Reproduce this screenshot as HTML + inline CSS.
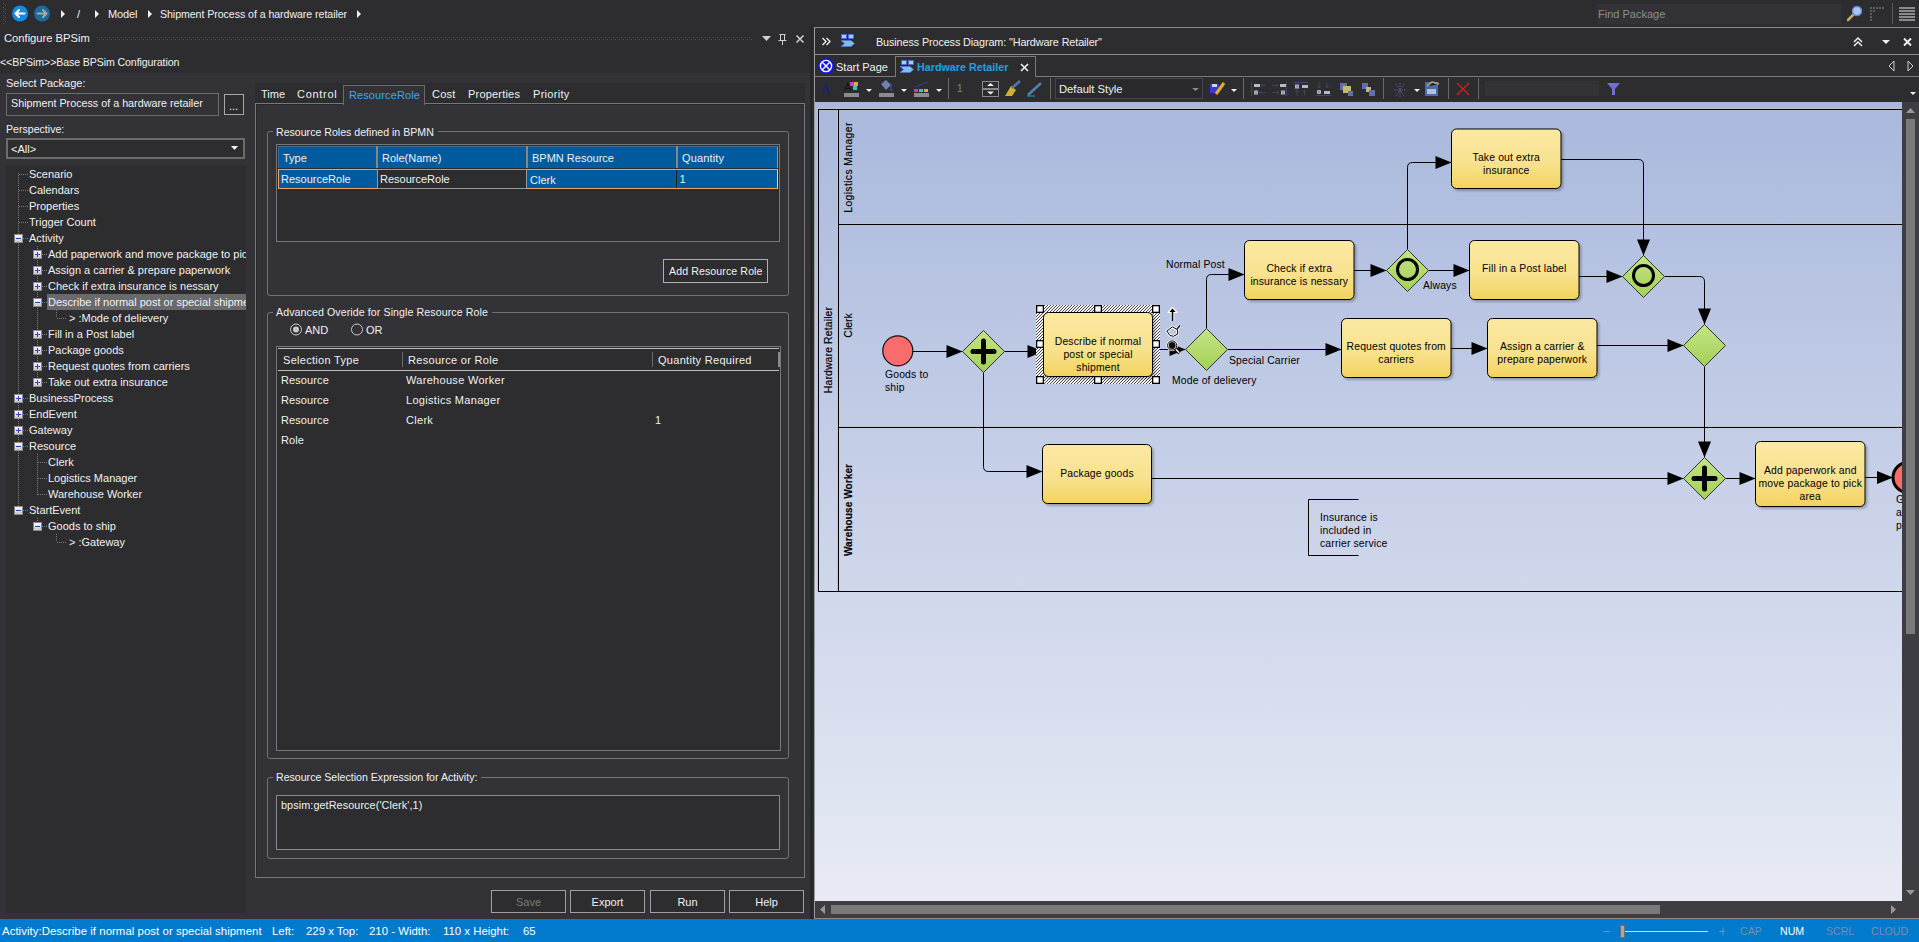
<!DOCTYPE html><html><head><meta charset="utf-8"><style>
html,body{margin:0;padding:0;} body{width:1919px;height:942px;position:relative;overflow:hidden;background:#2d2d30;font-family:"Liberation Sans", sans-serif;} div{box-sizing:border-box;}
</style></head><body>
<svg style="position:absolute;left:0;top:0" width="10" height="27"><rect x="3" y="3" width="1" height="1" fill="#5a5a5e"/><rect x="5" y="5" width="1" height="1" fill="#5a5a5e"/><rect x="3" y="7" width="1" height="1" fill="#5a5a5e"/><rect x="5" y="9" width="1" height="1" fill="#5a5a5e"/><rect x="3" y="11" width="1" height="1" fill="#5a5a5e"/><rect x="5" y="13" width="1" height="1" fill="#5a5a5e"/><rect x="3" y="15" width="1" height="1" fill="#5a5a5e"/><rect x="5" y="17" width="1" height="1" fill="#5a5a5e"/><rect x="3" y="19" width="1" height="1" fill="#5a5a5e"/><rect x="5" y="21" width="1" height="1" fill="#5a5a5e"/><rect x="3" y="23" width="1" height="1" fill="#5a5a5e"/></svg>
<svg style="position:absolute;left:0;top:0" width="60" height="27">
<circle cx="20" cy="13.5" r="8" fill="#1a8ad8"/>
<path d="M15.5 13.5 H24.5 M15.5 13.5 L19 10 M15.5 13.5 L19 17" stroke="#fff" stroke-width="2" fill="none" stroke-linecap="round"/>
<circle cx="42" cy="13.5" r="8" fill="#1a6a9c"/>
<path d="M46.5 13.5 H37.5 M46.5 13.5 L43 10 M46.5 13.5 L43 17" stroke="#a8a8a8" stroke-width="2" fill="none" stroke-linecap="round"/>
</svg>
<svg style="position:absolute;left:61px;top:10px" width="5" height="9"><path d="M0 0 L4 4 L0 8 Z" fill="#f1f1f1"/></svg>
<div style="position:absolute;left:77px;top:7.0px;line-height:14px;font-size:11px;color:#f1f1f1;white-space:nowrap;text-align:left;">/</div>
<svg style="position:absolute;left:95px;top:10px" width="5" height="9"><path d="M0 0 L4 4 L0 8 Z" fill="#f1f1f1"/></svg>
<div style="position:absolute;left:108px;top:7.0px;line-height:14px;font-size:11px;color:#f1f1f1;white-space:nowrap;text-align:left;letter-spacing:-0.1px">Model</div>
<svg style="position:absolute;left:148px;top:10px" width="5" height="9"><path d="M0 0 L4 4 L0 8 Z" fill="#f1f1f1"/></svg>
<div style="position:absolute;left:160px;top:7.0px;line-height:14px;font-size:10.6px;color:#f1f1f1;white-space:nowrap;text-align:left;letter-spacing:-0.05px">Shipment Process of a hardware retailer</div>
<svg style="position:absolute;left:357px;top:10px" width="5" height="9"><path d="M0 0 L4 4 L0 8 Z" fill="#f1f1f1"/></svg>
<div style="position:absolute;left:1597px;top:4px;width:244px;height:20px;background:#333337"></div>
<div style="position:absolute;left:1598px;top:7.0px;line-height:14px;font-size:11px;color:#8c8c8c;white-space:nowrap;text-align:left;">Find Package</div>
<svg style="position:absolute;left:1845px;top:5px" width="20" height="18">
<line x1="3" y1="15" x2="9" y2="9" stroke="#c8a878" stroke-width="2.5" stroke-linecap="round"/>
<circle cx="12" cy="6" r="4.5" fill="#a8c8f0" stroke="#6a8ad0" stroke-width="1.5"/>
</svg>
<svg style="position:absolute;left:1870px;top:7px" width="15" height="15"><rect x="0" y="0" width="2" height="2" fill="#5c5c5c"/><rect x="3" y="0" width="2" height="2" fill="#5c5c5c"/><rect x="6" y="0" width="2" height="2" fill="#5c5c5c"/><rect x="9" y="0" width="2" height="2" fill="#5c5c5c"/><rect x="12" y="0" width="2" height="2" fill="#5c5c5c"/><rect x="0" y="3" width="2" height="2" fill="#5c5c5c"/><rect x="0" y="6" width="2" height="2" fill="#5c5c5c"/><rect x="3" y="3" width="2" height="2" fill="#5c5c5c"/><rect x="0" y="9" width="2" height="2" fill="#5c5c5c"/><rect x="0" y="12" width="2" height="2" fill="#5c5c5c"/></svg>
<div style="position:absolute;left:1892px;top:3px;width:1px;height:21px;background:#5a5a5e"></div>
<svg style="position:absolute;left:1899px;top:7px" width="16" height="15"><rect x="0" y="0" width="16" height="2" fill="#8a8a8a"/><rect x="0" y="3" width="16" height="2" fill="#8a8a8a"/><rect x="0" y="6" width="16" height="2" fill="#8a8a8a"/><rect x="0" y="9" width="16" height="2" fill="#8a8a8a"/><rect x="0" y="12" width="16" height="2" fill="#8a8a8a"/></svg>
<div style="position:absolute;left:4px;top:31.0px;line-height:14px;font-size:11.2px;color:#f1f1f1;white-space:nowrap;text-align:left;">Configure BPSim</div>
<svg style="position:absolute;left:97px;top:37px" width="660" height="4"><rect x="0" y="0" width="1" height="1" fill="#55555a"/><rect x="2" y="2" width="1" height="1" fill="#55555a"/><rect x="4" y="0" width="1" height="1" fill="#55555a"/><rect x="6" y="2" width="1" height="1" fill="#55555a"/><rect x="8" y="0" width="1" height="1" fill="#55555a"/><rect x="10" y="2" width="1" height="1" fill="#55555a"/><rect x="12" y="0" width="1" height="1" fill="#55555a"/><rect x="14" y="2" width="1" height="1" fill="#55555a"/><rect x="16" y="0" width="1" height="1" fill="#55555a"/><rect x="18" y="2" width="1" height="1" fill="#55555a"/><rect x="20" y="0" width="1" height="1" fill="#55555a"/><rect x="22" y="2" width="1" height="1" fill="#55555a"/><rect x="24" y="0" width="1" height="1" fill="#55555a"/><rect x="26" y="2" width="1" height="1" fill="#55555a"/><rect x="28" y="0" width="1" height="1" fill="#55555a"/><rect x="30" y="2" width="1" height="1" fill="#55555a"/><rect x="32" y="0" width="1" height="1" fill="#55555a"/><rect x="34" y="2" width="1" height="1" fill="#55555a"/><rect x="36" y="0" width="1" height="1" fill="#55555a"/><rect x="38" y="2" width="1" height="1" fill="#55555a"/><rect x="40" y="0" width="1" height="1" fill="#55555a"/><rect x="42" y="2" width="1" height="1" fill="#55555a"/><rect x="44" y="0" width="1" height="1" fill="#55555a"/><rect x="46" y="2" width="1" height="1" fill="#55555a"/><rect x="48" y="0" width="1" height="1" fill="#55555a"/><rect x="50" y="2" width="1" height="1" fill="#55555a"/><rect x="52" y="0" width="1" height="1" fill="#55555a"/><rect x="54" y="2" width="1" height="1" fill="#55555a"/><rect x="56" y="0" width="1" height="1" fill="#55555a"/><rect x="58" y="2" width="1" height="1" fill="#55555a"/><rect x="60" y="0" width="1" height="1" fill="#55555a"/><rect x="62" y="2" width="1" height="1" fill="#55555a"/><rect x="64" y="0" width="1" height="1" fill="#55555a"/><rect x="66" y="2" width="1" height="1" fill="#55555a"/><rect x="68" y="0" width="1" height="1" fill="#55555a"/><rect x="70" y="2" width="1" height="1" fill="#55555a"/><rect x="72" y="0" width="1" height="1" fill="#55555a"/><rect x="74" y="2" width="1" height="1" fill="#55555a"/><rect x="76" y="0" width="1" height="1" fill="#55555a"/><rect x="78" y="2" width="1" height="1" fill="#55555a"/><rect x="80" y="0" width="1" height="1" fill="#55555a"/><rect x="82" y="2" width="1" height="1" fill="#55555a"/><rect x="84" y="0" width="1" height="1" fill="#55555a"/><rect x="86" y="2" width="1" height="1" fill="#55555a"/><rect x="88" y="0" width="1" height="1" fill="#55555a"/><rect x="90" y="2" width="1" height="1" fill="#55555a"/><rect x="92" y="0" width="1" height="1" fill="#55555a"/><rect x="94" y="2" width="1" height="1" fill="#55555a"/><rect x="96" y="0" width="1" height="1" fill="#55555a"/><rect x="98" y="2" width="1" height="1" fill="#55555a"/><rect x="100" y="0" width="1" height="1" fill="#55555a"/><rect x="102" y="2" width="1" height="1" fill="#55555a"/><rect x="104" y="0" width="1" height="1" fill="#55555a"/><rect x="106" y="2" width="1" height="1" fill="#55555a"/><rect x="108" y="0" width="1" height="1" fill="#55555a"/><rect x="110" y="2" width="1" height="1" fill="#55555a"/><rect x="112" y="0" width="1" height="1" fill="#55555a"/><rect x="114" y="2" width="1" height="1" fill="#55555a"/><rect x="116" y="0" width="1" height="1" fill="#55555a"/><rect x="118" y="2" width="1" height="1" fill="#55555a"/><rect x="120" y="0" width="1" height="1" fill="#55555a"/><rect x="122" y="2" width="1" height="1" fill="#55555a"/><rect x="124" y="0" width="1" height="1" fill="#55555a"/><rect x="126" y="2" width="1" height="1" fill="#55555a"/><rect x="128" y="0" width="1" height="1" fill="#55555a"/><rect x="130" y="2" width="1" height="1" fill="#55555a"/><rect x="132" y="0" width="1" height="1" fill="#55555a"/><rect x="134" y="2" width="1" height="1" fill="#55555a"/><rect x="136" y="0" width="1" height="1" fill="#55555a"/><rect x="138" y="2" width="1" height="1" fill="#55555a"/><rect x="140" y="0" width="1" height="1" fill="#55555a"/><rect x="142" y="2" width="1" height="1" fill="#55555a"/><rect x="144" y="0" width="1" height="1" fill="#55555a"/><rect x="146" y="2" width="1" height="1" fill="#55555a"/><rect x="148" y="0" width="1" height="1" fill="#55555a"/><rect x="150" y="2" width="1" height="1" fill="#55555a"/><rect x="152" y="0" width="1" height="1" fill="#55555a"/><rect x="154" y="2" width="1" height="1" fill="#55555a"/><rect x="156" y="0" width="1" height="1" fill="#55555a"/><rect x="158" y="2" width="1" height="1" fill="#55555a"/><rect x="160" y="0" width="1" height="1" fill="#55555a"/><rect x="162" y="2" width="1" height="1" fill="#55555a"/><rect x="164" y="0" width="1" height="1" fill="#55555a"/><rect x="166" y="2" width="1" height="1" fill="#55555a"/><rect x="168" y="0" width="1" height="1" fill="#55555a"/><rect x="170" y="2" width="1" height="1" fill="#55555a"/><rect x="172" y="0" width="1" height="1" fill="#55555a"/><rect x="174" y="2" width="1" height="1" fill="#55555a"/><rect x="176" y="0" width="1" height="1" fill="#55555a"/><rect x="178" y="2" width="1" height="1" fill="#55555a"/><rect x="180" y="0" width="1" height="1" fill="#55555a"/><rect x="182" y="2" width="1" height="1" fill="#55555a"/><rect x="184" y="0" width="1" height="1" fill="#55555a"/><rect x="186" y="2" width="1" height="1" fill="#55555a"/><rect x="188" y="0" width="1" height="1" fill="#55555a"/><rect x="190" y="2" width="1" height="1" fill="#55555a"/><rect x="192" y="0" width="1" height="1" fill="#55555a"/><rect x="194" y="2" width="1" height="1" fill="#55555a"/><rect x="196" y="0" width="1" height="1" fill="#55555a"/><rect x="198" y="2" width="1" height="1" fill="#55555a"/><rect x="200" y="0" width="1" height="1" fill="#55555a"/><rect x="202" y="2" width="1" height="1" fill="#55555a"/><rect x="204" y="0" width="1" height="1" fill="#55555a"/><rect x="206" y="2" width="1" height="1" fill="#55555a"/><rect x="208" y="0" width="1" height="1" fill="#55555a"/><rect x="210" y="2" width="1" height="1" fill="#55555a"/><rect x="212" y="0" width="1" height="1" fill="#55555a"/><rect x="214" y="2" width="1" height="1" fill="#55555a"/><rect x="216" y="0" width="1" height="1" fill="#55555a"/><rect x="218" y="2" width="1" height="1" fill="#55555a"/><rect x="220" y="0" width="1" height="1" fill="#55555a"/><rect x="222" y="2" width="1" height="1" fill="#55555a"/><rect x="224" y="0" width="1" height="1" fill="#55555a"/><rect x="226" y="2" width="1" height="1" fill="#55555a"/><rect x="228" y="0" width="1" height="1" fill="#55555a"/><rect x="230" y="2" width="1" height="1" fill="#55555a"/><rect x="232" y="0" width="1" height="1" fill="#55555a"/><rect x="234" y="2" width="1" height="1" fill="#55555a"/><rect x="236" y="0" width="1" height="1" fill="#55555a"/><rect x="238" y="2" width="1" height="1" fill="#55555a"/><rect x="240" y="0" width="1" height="1" fill="#55555a"/><rect x="242" y="2" width="1" height="1" fill="#55555a"/><rect x="244" y="0" width="1" height="1" fill="#55555a"/><rect x="246" y="2" width="1" height="1" fill="#55555a"/><rect x="248" y="0" width="1" height="1" fill="#55555a"/><rect x="250" y="2" width="1" height="1" fill="#55555a"/><rect x="252" y="0" width="1" height="1" fill="#55555a"/><rect x="254" y="2" width="1" height="1" fill="#55555a"/><rect x="256" y="0" width="1" height="1" fill="#55555a"/><rect x="258" y="2" width="1" height="1" fill="#55555a"/><rect x="260" y="0" width="1" height="1" fill="#55555a"/><rect x="262" y="2" width="1" height="1" fill="#55555a"/><rect x="264" y="0" width="1" height="1" fill="#55555a"/><rect x="266" y="2" width="1" height="1" fill="#55555a"/><rect x="268" y="0" width="1" height="1" fill="#55555a"/><rect x="270" y="2" width="1" height="1" fill="#55555a"/><rect x="272" y="0" width="1" height="1" fill="#55555a"/><rect x="274" y="2" width="1" height="1" fill="#55555a"/><rect x="276" y="0" width="1" height="1" fill="#55555a"/><rect x="278" y="2" width="1" height="1" fill="#55555a"/><rect x="280" y="0" width="1" height="1" fill="#55555a"/><rect x="282" y="2" width="1" height="1" fill="#55555a"/><rect x="284" y="0" width="1" height="1" fill="#55555a"/><rect x="286" y="2" width="1" height="1" fill="#55555a"/><rect x="288" y="0" width="1" height="1" fill="#55555a"/><rect x="290" y="2" width="1" height="1" fill="#55555a"/><rect x="292" y="0" width="1" height="1" fill="#55555a"/><rect x="294" y="2" width="1" height="1" fill="#55555a"/><rect x="296" y="0" width="1" height="1" fill="#55555a"/><rect x="298" y="2" width="1" height="1" fill="#55555a"/><rect x="300" y="0" width="1" height="1" fill="#55555a"/><rect x="302" y="2" width="1" height="1" fill="#55555a"/><rect x="304" y="0" width="1" height="1" fill="#55555a"/><rect x="306" y="2" width="1" height="1" fill="#55555a"/><rect x="308" y="0" width="1" height="1" fill="#55555a"/><rect x="310" y="2" width="1" height="1" fill="#55555a"/><rect x="312" y="0" width="1" height="1" fill="#55555a"/><rect x="314" y="2" width="1" height="1" fill="#55555a"/><rect x="316" y="0" width="1" height="1" fill="#55555a"/><rect x="318" y="2" width="1" height="1" fill="#55555a"/><rect x="320" y="0" width="1" height="1" fill="#55555a"/><rect x="322" y="2" width="1" height="1" fill="#55555a"/><rect x="324" y="0" width="1" height="1" fill="#55555a"/><rect x="326" y="2" width="1" height="1" fill="#55555a"/><rect x="328" y="0" width="1" height="1" fill="#55555a"/><rect x="330" y="2" width="1" height="1" fill="#55555a"/><rect x="332" y="0" width="1" height="1" fill="#55555a"/><rect x="334" y="2" width="1" height="1" fill="#55555a"/><rect x="336" y="0" width="1" height="1" fill="#55555a"/><rect x="338" y="2" width="1" height="1" fill="#55555a"/><rect x="340" y="0" width="1" height="1" fill="#55555a"/><rect x="342" y="2" width="1" height="1" fill="#55555a"/><rect x="344" y="0" width="1" height="1" fill="#55555a"/><rect x="346" y="2" width="1" height="1" fill="#55555a"/><rect x="348" y="0" width="1" height="1" fill="#55555a"/><rect x="350" y="2" width="1" height="1" fill="#55555a"/><rect x="352" y="0" width="1" height="1" fill="#55555a"/><rect x="354" y="2" width="1" height="1" fill="#55555a"/><rect x="356" y="0" width="1" height="1" fill="#55555a"/><rect x="358" y="2" width="1" height="1" fill="#55555a"/><rect x="360" y="0" width="1" height="1" fill="#55555a"/><rect x="362" y="2" width="1" height="1" fill="#55555a"/><rect x="364" y="0" width="1" height="1" fill="#55555a"/><rect x="366" y="2" width="1" height="1" fill="#55555a"/><rect x="368" y="0" width="1" height="1" fill="#55555a"/><rect x="370" y="2" width="1" height="1" fill="#55555a"/><rect x="372" y="0" width="1" height="1" fill="#55555a"/><rect x="374" y="2" width="1" height="1" fill="#55555a"/><rect x="376" y="0" width="1" height="1" fill="#55555a"/><rect x="378" y="2" width="1" height="1" fill="#55555a"/><rect x="380" y="0" width="1" height="1" fill="#55555a"/><rect x="382" y="2" width="1" height="1" fill="#55555a"/><rect x="384" y="0" width="1" height="1" fill="#55555a"/><rect x="386" y="2" width="1" height="1" fill="#55555a"/><rect x="388" y="0" width="1" height="1" fill="#55555a"/><rect x="390" y="2" width="1" height="1" fill="#55555a"/><rect x="392" y="0" width="1" height="1" fill="#55555a"/><rect x="394" y="2" width="1" height="1" fill="#55555a"/><rect x="396" y="0" width="1" height="1" fill="#55555a"/><rect x="398" y="2" width="1" height="1" fill="#55555a"/><rect x="400" y="0" width="1" height="1" fill="#55555a"/><rect x="402" y="2" width="1" height="1" fill="#55555a"/><rect x="404" y="0" width="1" height="1" fill="#55555a"/><rect x="406" y="2" width="1" height="1" fill="#55555a"/><rect x="408" y="0" width="1" height="1" fill="#55555a"/><rect x="410" y="2" width="1" height="1" fill="#55555a"/><rect x="412" y="0" width="1" height="1" fill="#55555a"/><rect x="414" y="2" width="1" height="1" fill="#55555a"/><rect x="416" y="0" width="1" height="1" fill="#55555a"/><rect x="418" y="2" width="1" height="1" fill="#55555a"/><rect x="420" y="0" width="1" height="1" fill="#55555a"/><rect x="422" y="2" width="1" height="1" fill="#55555a"/><rect x="424" y="0" width="1" height="1" fill="#55555a"/><rect x="426" y="2" width="1" height="1" fill="#55555a"/><rect x="428" y="0" width="1" height="1" fill="#55555a"/><rect x="430" y="2" width="1" height="1" fill="#55555a"/><rect x="432" y="0" width="1" height="1" fill="#55555a"/><rect x="434" y="2" width="1" height="1" fill="#55555a"/><rect x="436" y="0" width="1" height="1" fill="#55555a"/><rect x="438" y="2" width="1" height="1" fill="#55555a"/><rect x="440" y="0" width="1" height="1" fill="#55555a"/><rect x="442" y="2" width="1" height="1" fill="#55555a"/><rect x="444" y="0" width="1" height="1" fill="#55555a"/><rect x="446" y="2" width="1" height="1" fill="#55555a"/><rect x="448" y="0" width="1" height="1" fill="#55555a"/><rect x="450" y="2" width="1" height="1" fill="#55555a"/><rect x="452" y="0" width="1" height="1" fill="#55555a"/><rect x="454" y="2" width="1" height="1" fill="#55555a"/><rect x="456" y="0" width="1" height="1" fill="#55555a"/><rect x="458" y="2" width="1" height="1" fill="#55555a"/><rect x="460" y="0" width="1" height="1" fill="#55555a"/><rect x="462" y="2" width="1" height="1" fill="#55555a"/><rect x="464" y="0" width="1" height="1" fill="#55555a"/><rect x="466" y="2" width="1" height="1" fill="#55555a"/><rect x="468" y="0" width="1" height="1" fill="#55555a"/><rect x="470" y="2" width="1" height="1" fill="#55555a"/><rect x="472" y="0" width="1" height="1" fill="#55555a"/><rect x="474" y="2" width="1" height="1" fill="#55555a"/><rect x="476" y="0" width="1" height="1" fill="#55555a"/><rect x="478" y="2" width="1" height="1" fill="#55555a"/><rect x="480" y="0" width="1" height="1" fill="#55555a"/><rect x="482" y="2" width="1" height="1" fill="#55555a"/><rect x="484" y="0" width="1" height="1" fill="#55555a"/><rect x="486" y="2" width="1" height="1" fill="#55555a"/><rect x="488" y="0" width="1" height="1" fill="#55555a"/><rect x="490" y="2" width="1" height="1" fill="#55555a"/><rect x="492" y="0" width="1" height="1" fill="#55555a"/><rect x="494" y="2" width="1" height="1" fill="#55555a"/><rect x="496" y="0" width="1" height="1" fill="#55555a"/><rect x="498" y="2" width="1" height="1" fill="#55555a"/><rect x="500" y="0" width="1" height="1" fill="#55555a"/><rect x="502" y="2" width="1" height="1" fill="#55555a"/><rect x="504" y="0" width="1" height="1" fill="#55555a"/><rect x="506" y="2" width="1" height="1" fill="#55555a"/><rect x="508" y="0" width="1" height="1" fill="#55555a"/><rect x="510" y="2" width="1" height="1" fill="#55555a"/><rect x="512" y="0" width="1" height="1" fill="#55555a"/><rect x="514" y="2" width="1" height="1" fill="#55555a"/><rect x="516" y="0" width="1" height="1" fill="#55555a"/><rect x="518" y="2" width="1" height="1" fill="#55555a"/><rect x="520" y="0" width="1" height="1" fill="#55555a"/><rect x="522" y="2" width="1" height="1" fill="#55555a"/><rect x="524" y="0" width="1" height="1" fill="#55555a"/><rect x="526" y="2" width="1" height="1" fill="#55555a"/><rect x="528" y="0" width="1" height="1" fill="#55555a"/><rect x="530" y="2" width="1" height="1" fill="#55555a"/><rect x="532" y="0" width="1" height="1" fill="#55555a"/><rect x="534" y="2" width="1" height="1" fill="#55555a"/><rect x="536" y="0" width="1" height="1" fill="#55555a"/><rect x="538" y="2" width="1" height="1" fill="#55555a"/><rect x="540" y="0" width="1" height="1" fill="#55555a"/><rect x="542" y="2" width="1" height="1" fill="#55555a"/><rect x="544" y="0" width="1" height="1" fill="#55555a"/><rect x="546" y="2" width="1" height="1" fill="#55555a"/><rect x="548" y="0" width="1" height="1" fill="#55555a"/><rect x="550" y="2" width="1" height="1" fill="#55555a"/><rect x="552" y="0" width="1" height="1" fill="#55555a"/><rect x="554" y="2" width="1" height="1" fill="#55555a"/><rect x="556" y="0" width="1" height="1" fill="#55555a"/><rect x="558" y="2" width="1" height="1" fill="#55555a"/><rect x="560" y="0" width="1" height="1" fill="#55555a"/><rect x="562" y="2" width="1" height="1" fill="#55555a"/><rect x="564" y="0" width="1" height="1" fill="#55555a"/><rect x="566" y="2" width="1" height="1" fill="#55555a"/><rect x="568" y="0" width="1" height="1" fill="#55555a"/><rect x="570" y="2" width="1" height="1" fill="#55555a"/><rect x="572" y="0" width="1" height="1" fill="#55555a"/><rect x="574" y="2" width="1" height="1" fill="#55555a"/><rect x="576" y="0" width="1" height="1" fill="#55555a"/><rect x="578" y="2" width="1" height="1" fill="#55555a"/><rect x="580" y="0" width="1" height="1" fill="#55555a"/><rect x="582" y="2" width="1" height="1" fill="#55555a"/><rect x="584" y="0" width="1" height="1" fill="#55555a"/><rect x="586" y="2" width="1" height="1" fill="#55555a"/><rect x="588" y="0" width="1" height="1" fill="#55555a"/><rect x="590" y="2" width="1" height="1" fill="#55555a"/><rect x="592" y="0" width="1" height="1" fill="#55555a"/><rect x="594" y="2" width="1" height="1" fill="#55555a"/><rect x="596" y="0" width="1" height="1" fill="#55555a"/><rect x="598" y="2" width="1" height="1" fill="#55555a"/><rect x="600" y="0" width="1" height="1" fill="#55555a"/><rect x="602" y="2" width="1" height="1" fill="#55555a"/><rect x="604" y="0" width="1" height="1" fill="#55555a"/><rect x="606" y="2" width="1" height="1" fill="#55555a"/><rect x="608" y="0" width="1" height="1" fill="#55555a"/><rect x="610" y="2" width="1" height="1" fill="#55555a"/><rect x="612" y="0" width="1" height="1" fill="#55555a"/><rect x="614" y="2" width="1" height="1" fill="#55555a"/><rect x="616" y="0" width="1" height="1" fill="#55555a"/><rect x="618" y="2" width="1" height="1" fill="#55555a"/><rect x="620" y="0" width="1" height="1" fill="#55555a"/><rect x="622" y="2" width="1" height="1" fill="#55555a"/><rect x="624" y="0" width="1" height="1" fill="#55555a"/><rect x="626" y="2" width="1" height="1" fill="#55555a"/><rect x="628" y="0" width="1" height="1" fill="#55555a"/><rect x="630" y="2" width="1" height="1" fill="#55555a"/><rect x="632" y="0" width="1" height="1" fill="#55555a"/><rect x="634" y="2" width="1" height="1" fill="#55555a"/><rect x="636" y="0" width="1" height="1" fill="#55555a"/><rect x="638" y="2" width="1" height="1" fill="#55555a"/><rect x="640" y="0" width="1" height="1" fill="#55555a"/><rect x="642" y="2" width="1" height="1" fill="#55555a"/><rect x="644" y="0" width="1" height="1" fill="#55555a"/><rect x="646" y="2" width="1" height="1" fill="#55555a"/><rect x="648" y="0" width="1" height="1" fill="#55555a"/><rect x="650" y="2" width="1" height="1" fill="#55555a"/><rect x="652" y="0" width="1" height="1" fill="#55555a"/><rect x="654" y="2" width="1" height="1" fill="#55555a"/></svg>
<svg style="position:absolute;left:760px;top:30px" width="50" height="16">
<path d="M2 6 L11 6 L6.5 11 Z" fill="#d0d0d0"/>
<path d="M19.5 4.5 H25.5 M20.5 4.5 V10.5 M24.5 4.5 V10.5 M18.5 10.5 H26.5 M22.5 10.5 V15" stroke="#d0d0d0" stroke-width="1" fill="none"/>
<path d="M36.5 5.5 L43.5 12.5 M43.5 5.5 L36.5 12.5" stroke="#d0d0d0" stroke-width="1.5"/>
</svg>
<div style="position:absolute;left:0px;top:54.7px;line-height:14px;font-size:10.6px;color:#f1f1f1;white-space:nowrap;text-align:left;letter-spacing:-0.1px">&lt;&lt;BPSim&gt;&gt;Base BPSim Configuration</div>
<div style="position:absolute;left:0px;top:73px;width:811px;height:846px;background:#333337"></div>
<div style="position:absolute;left:6px;top:76.0px;line-height:14px;font-size:11px;color:#f1f1f1;white-space:nowrap;text-align:left;">Select Package:</div>
<div style="position:absolute;left:6px;top:93px;width:213px;height:23px;border:1px solid #6c6c6c;background:#333337"></div>
<div style="position:absolute;left:11px;top:96.3px;line-height:14px;font-size:10.75px;color:#f1f1f1;white-space:nowrap;text-align:left;letter-spacing:0px">Shipment Process of a hardware retailer</div>
<div style="position:absolute;left:224px;top:94px;width:20px;height:21px;border:1px solid #a8a8a8;background:#2d2d30"></div>
<div style="position:absolute;left:229px;top:99.0px;line-height:14px;font-size:11px;color:#f1f1f1;white-space:nowrap;text-align:left;letter-spacing:0px">...</div>
<div style="position:absolute;left:6px;top:122.0px;line-height:14px;font-size:10.6px;color:#f1f1f1;white-space:nowrap;text-align:left;">Perspective:</div>
<div style="position:absolute;left:6px;top:138px;width:239px;height:21px;border:2px solid #6c6c6c;background:#2d2d30"></div>
<div style="position:absolute;left:11px;top:141.5px;line-height:14px;font-size:11px;color:#f1f1f1;white-space:nowrap;text-align:left;">&lt;All&gt;</div>
<svg style="position:absolute;left:231px;top:146px" width="8" height="5"><path d="M0 0 H7 L3.5 4 Z" fill="#f1f1f1"/></svg>
<div style="position:absolute;left:6px;top:166px;width:240px;height:747px;background:#2d2d30"></div>
<div style="position:absolute;left:47px;top:294px;width:199px;height:16px;background:#6a6a6c"></div>
<div style="position:absolute;left:0;top:0;width:246px;height:942px;overflow:hidden">
<div style="position:absolute;left:29px;top:167.0px;line-height:14px;font-size:11px;color:#f1f1f1;white-space:nowrap;text-align:left;letter-spacing:0px;">Scenario</div>
<div style="position:absolute;left:29px;top:183.0px;line-height:14px;font-size:11px;color:#f1f1f1;white-space:nowrap;text-align:left;letter-spacing:0px;">Calendars</div>
<div style="position:absolute;left:29px;top:199.0px;line-height:14px;font-size:11px;color:#f1f1f1;white-space:nowrap;text-align:left;letter-spacing:0px;">Properties</div>
<div style="position:absolute;left:29px;top:215.0px;line-height:14px;font-size:11px;color:#f1f1f1;white-space:nowrap;text-align:left;letter-spacing:0px;">Trigger Count</div>
<div style="position:absolute;left:29px;top:231.0px;line-height:14px;font-size:11px;color:#f1f1f1;white-space:nowrap;text-align:left;letter-spacing:0px;">Activity</div>
<div style="position:absolute;left:48px;top:247.0px;line-height:14px;font-size:11px;color:#f1f1f1;white-space:nowrap;text-align:left;letter-spacing:0px;">Add paperwork and move package to pick</div>
<div style="position:absolute;left:48px;top:263.0px;line-height:14px;font-size:11px;color:#f1f1f1;white-space:nowrap;text-align:left;letter-spacing:0px;">Assign a carrier &amp; prepare paperwork</div>
<div style="position:absolute;left:48px;top:279.0px;line-height:14px;font-size:11px;color:#f1f1f1;white-space:nowrap;text-align:left;letter-spacing:0px;">Check if extra insurance is nessary</div>
<div style="position:absolute;left:48px;top:295.0px;line-height:14px;font-size:11px;color:#f1f1f1;white-space:nowrap;text-align:left;letter-spacing:0px;">Describe if normal post or special shipment</div>
<div style="position:absolute;left:69px;top:311.0px;line-height:14px;font-size:11px;color:#f1f1f1;white-space:nowrap;text-align:left;letter-spacing:0px;">&gt; :Mode of delievery</div>
<div style="position:absolute;left:48px;top:327.0px;line-height:14px;font-size:11px;color:#f1f1f1;white-space:nowrap;text-align:left;letter-spacing:0px;">Fill in a Post label</div>
<div style="position:absolute;left:48px;top:343.0px;line-height:14px;font-size:11px;color:#f1f1f1;white-space:nowrap;text-align:left;letter-spacing:0px;">Package goods</div>
<div style="position:absolute;left:48px;top:359.0px;line-height:14px;font-size:11px;color:#f1f1f1;white-space:nowrap;text-align:left;letter-spacing:0px;">Request quotes from carriers</div>
<div style="position:absolute;left:48px;top:375.0px;line-height:14px;font-size:11px;color:#f1f1f1;white-space:nowrap;text-align:left;letter-spacing:0px;">Take out extra insurance</div>
<div style="position:absolute;left:29px;top:391.0px;line-height:14px;font-size:11px;color:#f1f1f1;white-space:nowrap;text-align:left;letter-spacing:0px;">BusinessProcess</div>
<div style="position:absolute;left:29px;top:407.0px;line-height:14px;font-size:11px;color:#f1f1f1;white-space:nowrap;text-align:left;letter-spacing:0px;">EndEvent</div>
<div style="position:absolute;left:29px;top:423.0px;line-height:14px;font-size:11px;color:#f1f1f1;white-space:nowrap;text-align:left;letter-spacing:0px;">Gateway</div>
<div style="position:absolute;left:29px;top:439.0px;line-height:14px;font-size:11px;color:#f1f1f1;white-space:nowrap;text-align:left;letter-spacing:0px;">Resource</div>
<div style="position:absolute;left:48px;top:455.0px;line-height:14px;font-size:11px;color:#f1f1f1;white-space:nowrap;text-align:left;letter-spacing:0px;">Clerk</div>
<div style="position:absolute;left:48px;top:471.0px;line-height:14px;font-size:11px;color:#f1f1f1;white-space:nowrap;text-align:left;letter-spacing:0px;">Logistics Manager</div>
<div style="position:absolute;left:48px;top:487.0px;line-height:14px;font-size:11px;color:#f1f1f1;white-space:nowrap;text-align:left;letter-spacing:0px;">Warehouse Worker</div>
<div style="position:absolute;left:29px;top:503.0px;line-height:14px;font-size:11px;color:#f1f1f1;white-space:nowrap;text-align:left;letter-spacing:0px;">StartEvent</div>
<div style="position:absolute;left:48px;top:519.0px;line-height:14px;font-size:11px;color:#f1f1f1;white-space:nowrap;text-align:left;letter-spacing:0px;">Goods to ship</div>
<div style="position:absolute;left:69px;top:535.0px;line-height:14px;font-size:11px;color:#f1f1f1;white-space:nowrap;text-align:left;letter-spacing:0px;">&gt; :Gateway</div>
</div>
<svg style="position:absolute;left:0;top:0" width="260" height="942"><defs><linearGradient id="eg" x1="0" y1="0" x2="0" y2="1"><stop offset="0" stop-color="#fafafa"/><stop offset="1" stop-color="#c8c8c8"/></linearGradient></defs><rect x="18" y="173" width="1" height="1" fill="#7a7a7a"/><rect x="18" y="175" width="1" height="1" fill="#7a7a7a"/><rect x="18" y="177" width="1" height="1" fill="#7a7a7a"/><rect x="18" y="179" width="1" height="1" fill="#7a7a7a"/><rect x="18" y="181" width="1" height="1" fill="#7a7a7a"/><rect x="18" y="183" width="1" height="1" fill="#7a7a7a"/><rect x="18" y="185" width="1" height="1" fill="#7a7a7a"/><rect x="18" y="187" width="1" height="1" fill="#7a7a7a"/><rect x="18" y="189" width="1" height="1" fill="#7a7a7a"/><rect x="18" y="191" width="1" height="1" fill="#7a7a7a"/><rect x="18" y="193" width="1" height="1" fill="#7a7a7a"/><rect x="18" y="195" width="1" height="1" fill="#7a7a7a"/><rect x="18" y="197" width="1" height="1" fill="#7a7a7a"/><rect x="18" y="199" width="1" height="1" fill="#7a7a7a"/><rect x="18" y="201" width="1" height="1" fill="#7a7a7a"/><rect x="18" y="203" width="1" height="1" fill="#7a7a7a"/><rect x="18" y="205" width="1" height="1" fill="#7a7a7a"/><rect x="18" y="207" width="1" height="1" fill="#7a7a7a"/><rect x="18" y="209" width="1" height="1" fill="#7a7a7a"/><rect x="18" y="211" width="1" height="1" fill="#7a7a7a"/><rect x="18" y="213" width="1" height="1" fill="#7a7a7a"/><rect x="18" y="215" width="1" height="1" fill="#7a7a7a"/><rect x="18" y="217" width="1" height="1" fill="#7a7a7a"/><rect x="18" y="219" width="1" height="1" fill="#7a7a7a"/><rect x="18" y="221" width="1" height="1" fill="#7a7a7a"/><rect x="18" y="223" width="1" height="1" fill="#7a7a7a"/><rect x="18" y="225" width="1" height="1" fill="#7a7a7a"/><rect x="18" y="227" width="1" height="1" fill="#7a7a7a"/><rect x="18" y="229" width="1" height="1" fill="#7a7a7a"/><rect x="18" y="231" width="1" height="1" fill="#7a7a7a"/><rect x="18" y="233" width="1" height="1" fill="#7a7a7a"/><rect x="18" y="235" width="1" height="1" fill="#7a7a7a"/><rect x="18" y="237" width="1" height="1" fill="#7a7a7a"/><rect x="18" y="239" width="1" height="1" fill="#7a7a7a"/><rect x="18" y="241" width="1" height="1" fill="#7a7a7a"/><rect x="18" y="243" width="1" height="1" fill="#7a7a7a"/><rect x="18" y="245" width="1" height="1" fill="#7a7a7a"/><rect x="18" y="247" width="1" height="1" fill="#7a7a7a"/><rect x="18" y="249" width="1" height="1" fill="#7a7a7a"/><rect x="18" y="251" width="1" height="1" fill="#7a7a7a"/><rect x="18" y="253" width="1" height="1" fill="#7a7a7a"/><rect x="18" y="255" width="1" height="1" fill="#7a7a7a"/><rect x="18" y="257" width="1" height="1" fill="#7a7a7a"/><rect x="18" y="259" width="1" height="1" fill="#7a7a7a"/><rect x="18" y="261" width="1" height="1" fill="#7a7a7a"/><rect x="18" y="263" width="1" height="1" fill="#7a7a7a"/><rect x="18" y="265" width="1" height="1" fill="#7a7a7a"/><rect x="18" y="267" width="1" height="1" fill="#7a7a7a"/><rect x="18" y="269" width="1" height="1" fill="#7a7a7a"/><rect x="18" y="271" width="1" height="1" fill="#7a7a7a"/><rect x="18" y="273" width="1" height="1" fill="#7a7a7a"/><rect x="18" y="275" width="1" height="1" fill="#7a7a7a"/><rect x="18" y="277" width="1" height="1" fill="#7a7a7a"/><rect x="18" y="279" width="1" height="1" fill="#7a7a7a"/><rect x="18" y="281" width="1" height="1" fill="#7a7a7a"/><rect x="18" y="283" width="1" height="1" fill="#7a7a7a"/><rect x="18" y="285" width="1" height="1" fill="#7a7a7a"/><rect x="18" y="287" width="1" height="1" fill="#7a7a7a"/><rect x="18" y="289" width="1" height="1" fill="#7a7a7a"/><rect x="18" y="291" width="1" height="1" fill="#7a7a7a"/><rect x="18" y="293" width="1" height="1" fill="#7a7a7a"/><rect x="18" y="295" width="1" height="1" fill="#7a7a7a"/><rect x="18" y="297" width="1" height="1" fill="#7a7a7a"/><rect x="18" y="299" width="1" height="1" fill="#7a7a7a"/><rect x="18" y="301" width="1" height="1" fill="#7a7a7a"/><rect x="18" y="303" width="1" height="1" fill="#7a7a7a"/><rect x="18" y="305" width="1" height="1" fill="#7a7a7a"/><rect x="18" y="307" width="1" height="1" fill="#7a7a7a"/><rect x="18" y="309" width="1" height="1" fill="#7a7a7a"/><rect x="18" y="311" width="1" height="1" fill="#7a7a7a"/><rect x="18" y="313" width="1" height="1" fill="#7a7a7a"/><rect x="18" y="315" width="1" height="1" fill="#7a7a7a"/><rect x="18" y="317" width="1" height="1" fill="#7a7a7a"/><rect x="18" y="319" width="1" height="1" fill="#7a7a7a"/><rect x="18" y="321" width="1" height="1" fill="#7a7a7a"/><rect x="18" y="323" width="1" height="1" fill="#7a7a7a"/><rect x="18" y="325" width="1" height="1" fill="#7a7a7a"/><rect x="18" y="327" width="1" height="1" fill="#7a7a7a"/><rect x="18" y="329" width="1" height="1" fill="#7a7a7a"/><rect x="18" y="331" width="1" height="1" fill="#7a7a7a"/><rect x="18" y="333" width="1" height="1" fill="#7a7a7a"/><rect x="18" y="335" width="1" height="1" fill="#7a7a7a"/><rect x="18" y="337" width="1" height="1" fill="#7a7a7a"/><rect x="18" y="339" width="1" height="1" fill="#7a7a7a"/><rect x="18" y="341" width="1" height="1" fill="#7a7a7a"/><rect x="18" y="343" width="1" height="1" fill="#7a7a7a"/><rect x="18" y="345" width="1" height="1" fill="#7a7a7a"/><rect x="18" y="347" width="1" height="1" fill="#7a7a7a"/><rect x="18" y="349" width="1" height="1" fill="#7a7a7a"/><rect x="18" y="351" width="1" height="1" fill="#7a7a7a"/><rect x="18" y="353" width="1" height="1" fill="#7a7a7a"/><rect x="18" y="355" width="1" height="1" fill="#7a7a7a"/><rect x="18" y="357" width="1" height="1" fill="#7a7a7a"/><rect x="18" y="359" width="1" height="1" fill="#7a7a7a"/><rect x="18" y="361" width="1" height="1" fill="#7a7a7a"/><rect x="18" y="363" width="1" height="1" fill="#7a7a7a"/><rect x="18" y="365" width="1" height="1" fill="#7a7a7a"/><rect x="18" y="367" width="1" height="1" fill="#7a7a7a"/><rect x="18" y="369" width="1" height="1" fill="#7a7a7a"/><rect x="18" y="371" width="1" height="1" fill="#7a7a7a"/><rect x="18" y="373" width="1" height="1" fill="#7a7a7a"/><rect x="18" y="375" width="1" height="1" fill="#7a7a7a"/><rect x="18" y="377" width="1" height="1" fill="#7a7a7a"/><rect x="18" y="379" width="1" height="1" fill="#7a7a7a"/><rect x="18" y="381" width="1" height="1" fill="#7a7a7a"/><rect x="18" y="383" width="1" height="1" fill="#7a7a7a"/><rect x="18" y="385" width="1" height="1" fill="#7a7a7a"/><rect x="18" y="387" width="1" height="1" fill="#7a7a7a"/><rect x="18" y="389" width="1" height="1" fill="#7a7a7a"/><rect x="18" y="391" width="1" height="1" fill="#7a7a7a"/><rect x="18" y="393" width="1" height="1" fill="#7a7a7a"/><rect x="18" y="395" width="1" height="1" fill="#7a7a7a"/><rect x="18" y="397" width="1" height="1" fill="#7a7a7a"/><rect x="18" y="399" width="1" height="1" fill="#7a7a7a"/><rect x="18" y="401" width="1" height="1" fill="#7a7a7a"/><rect x="18" y="403" width="1" height="1" fill="#7a7a7a"/><rect x="18" y="405" width="1" height="1" fill="#7a7a7a"/><rect x="18" y="407" width="1" height="1" fill="#7a7a7a"/><rect x="18" y="409" width="1" height="1" fill="#7a7a7a"/><rect x="18" y="411" width="1" height="1" fill="#7a7a7a"/><rect x="18" y="413" width="1" height="1" fill="#7a7a7a"/><rect x="18" y="415" width="1" height="1" fill="#7a7a7a"/><rect x="18" y="417" width="1" height="1" fill="#7a7a7a"/><rect x="18" y="419" width="1" height="1" fill="#7a7a7a"/><rect x="18" y="421" width="1" height="1" fill="#7a7a7a"/><rect x="18" y="423" width="1" height="1" fill="#7a7a7a"/><rect x="18" y="425" width="1" height="1" fill="#7a7a7a"/><rect x="18" y="427" width="1" height="1" fill="#7a7a7a"/><rect x="18" y="429" width="1" height="1" fill="#7a7a7a"/><rect x="18" y="431" width="1" height="1" fill="#7a7a7a"/><rect x="18" y="433" width="1" height="1" fill="#7a7a7a"/><rect x="18" y="435" width="1" height="1" fill="#7a7a7a"/><rect x="18" y="437" width="1" height="1" fill="#7a7a7a"/><rect x="18" y="439" width="1" height="1" fill="#7a7a7a"/><rect x="18" y="441" width="1" height="1" fill="#7a7a7a"/><rect x="18" y="443" width="1" height="1" fill="#7a7a7a"/><rect x="18" y="445" width="1" height="1" fill="#7a7a7a"/><rect x="18" y="447" width="1" height="1" fill="#7a7a7a"/><rect x="18" y="449" width="1" height="1" fill="#7a7a7a"/><rect x="18" y="451" width="1" height="1" fill="#7a7a7a"/><rect x="18" y="453" width="1" height="1" fill="#7a7a7a"/><rect x="18" y="455" width="1" height="1" fill="#7a7a7a"/><rect x="18" y="457" width="1" height="1" fill="#7a7a7a"/><rect x="18" y="459" width="1" height="1" fill="#7a7a7a"/><rect x="18" y="461" width="1" height="1" fill="#7a7a7a"/><rect x="18" y="463" width="1" height="1" fill="#7a7a7a"/><rect x="18" y="465" width="1" height="1" fill="#7a7a7a"/><rect x="18" y="467" width="1" height="1" fill="#7a7a7a"/><rect x="18" y="469" width="1" height="1" fill="#7a7a7a"/><rect x="18" y="471" width="1" height="1" fill="#7a7a7a"/><rect x="18" y="473" width="1" height="1" fill="#7a7a7a"/><rect x="18" y="475" width="1" height="1" fill="#7a7a7a"/><rect x="18" y="477" width="1" height="1" fill="#7a7a7a"/><rect x="18" y="479" width="1" height="1" fill="#7a7a7a"/><rect x="18" y="481" width="1" height="1" fill="#7a7a7a"/><rect x="18" y="483" width="1" height="1" fill="#7a7a7a"/><rect x="18" y="485" width="1" height="1" fill="#7a7a7a"/><rect x="18" y="487" width="1" height="1" fill="#7a7a7a"/><rect x="18" y="489" width="1" height="1" fill="#7a7a7a"/><rect x="18" y="491" width="1" height="1" fill="#7a7a7a"/><rect x="18" y="493" width="1" height="1" fill="#7a7a7a"/><rect x="18" y="495" width="1" height="1" fill="#7a7a7a"/><rect x="18" y="497" width="1" height="1" fill="#7a7a7a"/><rect x="18" y="499" width="1" height="1" fill="#7a7a7a"/><rect x="18" y="501" width="1" height="1" fill="#7a7a7a"/><rect x="18" y="503" width="1" height="1" fill="#7a7a7a"/><rect x="18" y="505" width="1" height="1" fill="#7a7a7a"/><rect x="18" y="507" width="1" height="1" fill="#7a7a7a"/><rect x="18" y="509" width="1" height="1" fill="#7a7a7a"/><rect x="37" y="246" width="1" height="1" fill="#7a7a7a"/><rect x="37" y="248" width="1" height="1" fill="#7a7a7a"/><rect x="37" y="250" width="1" height="1" fill="#7a7a7a"/><rect x="37" y="252" width="1" height="1" fill="#7a7a7a"/><rect x="37" y="254" width="1" height="1" fill="#7a7a7a"/><rect x="37" y="256" width="1" height="1" fill="#7a7a7a"/><rect x="37" y="258" width="1" height="1" fill="#7a7a7a"/><rect x="37" y="260" width="1" height="1" fill="#7a7a7a"/><rect x="37" y="262" width="1" height="1" fill="#7a7a7a"/><rect x="37" y="264" width="1" height="1" fill="#7a7a7a"/><rect x="37" y="266" width="1" height="1" fill="#7a7a7a"/><rect x="37" y="268" width="1" height="1" fill="#7a7a7a"/><rect x="37" y="270" width="1" height="1" fill="#7a7a7a"/><rect x="37" y="272" width="1" height="1" fill="#7a7a7a"/><rect x="37" y="274" width="1" height="1" fill="#7a7a7a"/><rect x="37" y="276" width="1" height="1" fill="#7a7a7a"/><rect x="37" y="278" width="1" height="1" fill="#7a7a7a"/><rect x="37" y="280" width="1" height="1" fill="#7a7a7a"/><rect x="37" y="282" width="1" height="1" fill="#7a7a7a"/><rect x="37" y="284" width="1" height="1" fill="#7a7a7a"/><rect x="37" y="286" width="1" height="1" fill="#7a7a7a"/><rect x="37" y="288" width="1" height="1" fill="#7a7a7a"/><rect x="37" y="290" width="1" height="1" fill="#7a7a7a"/><rect x="37" y="292" width="1" height="1" fill="#7a7a7a"/><rect x="37" y="294" width="1" height="1" fill="#7a7a7a"/><rect x="37" y="296" width="1" height="1" fill="#7a7a7a"/><rect x="37" y="298" width="1" height="1" fill="#7a7a7a"/><rect x="37" y="300" width="1" height="1" fill="#7a7a7a"/><rect x="37" y="302" width="1" height="1" fill="#7a7a7a"/><rect x="37" y="304" width="1" height="1" fill="#7a7a7a"/><rect x="37" y="306" width="1" height="1" fill="#7a7a7a"/><rect x="37" y="308" width="1" height="1" fill="#7a7a7a"/><rect x="37" y="310" width="1" height="1" fill="#7a7a7a"/><rect x="37" y="312" width="1" height="1" fill="#7a7a7a"/><rect x="37" y="314" width="1" height="1" fill="#7a7a7a"/><rect x="37" y="316" width="1" height="1" fill="#7a7a7a"/><rect x="37" y="318" width="1" height="1" fill="#7a7a7a"/><rect x="37" y="320" width="1" height="1" fill="#7a7a7a"/><rect x="37" y="322" width="1" height="1" fill="#7a7a7a"/><rect x="37" y="324" width="1" height="1" fill="#7a7a7a"/><rect x="37" y="326" width="1" height="1" fill="#7a7a7a"/><rect x="37" y="328" width="1" height="1" fill="#7a7a7a"/><rect x="37" y="330" width="1" height="1" fill="#7a7a7a"/><rect x="37" y="332" width="1" height="1" fill="#7a7a7a"/><rect x="37" y="334" width="1" height="1" fill="#7a7a7a"/><rect x="37" y="336" width="1" height="1" fill="#7a7a7a"/><rect x="37" y="338" width="1" height="1" fill="#7a7a7a"/><rect x="37" y="340" width="1" height="1" fill="#7a7a7a"/><rect x="37" y="342" width="1" height="1" fill="#7a7a7a"/><rect x="37" y="344" width="1" height="1" fill="#7a7a7a"/><rect x="37" y="346" width="1" height="1" fill="#7a7a7a"/><rect x="37" y="348" width="1" height="1" fill="#7a7a7a"/><rect x="37" y="350" width="1" height="1" fill="#7a7a7a"/><rect x="37" y="352" width="1" height="1" fill="#7a7a7a"/><rect x="37" y="354" width="1" height="1" fill="#7a7a7a"/><rect x="37" y="356" width="1" height="1" fill="#7a7a7a"/><rect x="37" y="358" width="1" height="1" fill="#7a7a7a"/><rect x="37" y="360" width="1" height="1" fill="#7a7a7a"/><rect x="37" y="362" width="1" height="1" fill="#7a7a7a"/><rect x="37" y="364" width="1" height="1" fill="#7a7a7a"/><rect x="37" y="366" width="1" height="1" fill="#7a7a7a"/><rect x="37" y="368" width="1" height="1" fill="#7a7a7a"/><rect x="37" y="370" width="1" height="1" fill="#7a7a7a"/><rect x="37" y="372" width="1" height="1" fill="#7a7a7a"/><rect x="37" y="374" width="1" height="1" fill="#7a7a7a"/><rect x="37" y="376" width="1" height="1" fill="#7a7a7a"/><rect x="37" y="378" width="1" height="1" fill="#7a7a7a"/><rect x="37" y="380" width="1" height="1" fill="#7a7a7a"/><rect x="37" y="382" width="1" height="1" fill="#7a7a7a"/><rect x="37" y="454" width="1" height="1" fill="#7a7a7a"/><rect x="37" y="456" width="1" height="1" fill="#7a7a7a"/><rect x="37" y="458" width="1" height="1" fill="#7a7a7a"/><rect x="37" y="460" width="1" height="1" fill="#7a7a7a"/><rect x="37" y="462" width="1" height="1" fill="#7a7a7a"/><rect x="37" y="464" width="1" height="1" fill="#7a7a7a"/><rect x="37" y="466" width="1" height="1" fill="#7a7a7a"/><rect x="37" y="468" width="1" height="1" fill="#7a7a7a"/><rect x="37" y="470" width="1" height="1" fill="#7a7a7a"/><rect x="37" y="472" width="1" height="1" fill="#7a7a7a"/><rect x="37" y="474" width="1" height="1" fill="#7a7a7a"/><rect x="37" y="476" width="1" height="1" fill="#7a7a7a"/><rect x="37" y="478" width="1" height="1" fill="#7a7a7a"/><rect x="37" y="480" width="1" height="1" fill="#7a7a7a"/><rect x="37" y="482" width="1" height="1" fill="#7a7a7a"/><rect x="37" y="484" width="1" height="1" fill="#7a7a7a"/><rect x="37" y="486" width="1" height="1" fill="#7a7a7a"/><rect x="37" y="488" width="1" height="1" fill="#7a7a7a"/><rect x="37" y="490" width="1" height="1" fill="#7a7a7a"/><rect x="37" y="492" width="1" height="1" fill="#7a7a7a"/><rect x="37" y="494" width="1" height="1" fill="#7a7a7a"/><rect x="37" y="518" width="1" height="1" fill="#7a7a7a"/><rect x="37" y="520" width="1" height="1" fill="#7a7a7a"/><rect x="37" y="522" width="1" height="1" fill="#7a7a7a"/><rect x="37" y="524" width="1" height="1" fill="#7a7a7a"/><rect x="37" y="526" width="1" height="1" fill="#7a7a7a"/><rect x="56" y="310" width="1" height="1" fill="#7a7a7a"/><rect x="56" y="312" width="1" height="1" fill="#7a7a7a"/><rect x="56" y="314" width="1" height="1" fill="#7a7a7a"/><rect x="56" y="316" width="1" height="1" fill="#7a7a7a"/><rect x="56" y="534" width="1" height="1" fill="#7a7a7a"/><rect x="56" y="536" width="1" height="1" fill="#7a7a7a"/><rect x="56" y="538" width="1" height="1" fill="#7a7a7a"/><rect x="56" y="540" width="1" height="1" fill="#7a7a7a"/><rect x="19" y="174" width="1" height="1" fill="#7a7a7a"/><rect x="21" y="174" width="1" height="1" fill="#7a7a7a"/><rect x="23" y="174" width="1" height="1" fill="#7a7a7a"/><rect x="25" y="174" width="1" height="1" fill="#7a7a7a"/><rect x="27" y="174" width="1" height="1" fill="#7a7a7a"/><rect x="19" y="190" width="1" height="1" fill="#7a7a7a"/><rect x="21" y="190" width="1" height="1" fill="#7a7a7a"/><rect x="23" y="190" width="1" height="1" fill="#7a7a7a"/><rect x="25" y="190" width="1" height="1" fill="#7a7a7a"/><rect x="27" y="190" width="1" height="1" fill="#7a7a7a"/><rect x="19" y="206" width="1" height="1" fill="#7a7a7a"/><rect x="21" y="206" width="1" height="1" fill="#7a7a7a"/><rect x="23" y="206" width="1" height="1" fill="#7a7a7a"/><rect x="25" y="206" width="1" height="1" fill="#7a7a7a"/><rect x="27" y="206" width="1" height="1" fill="#7a7a7a"/><rect x="19" y="222" width="1" height="1" fill="#7a7a7a"/><rect x="21" y="222" width="1" height="1" fill="#7a7a7a"/><rect x="23" y="222" width="1" height="1" fill="#7a7a7a"/><rect x="25" y="222" width="1" height="1" fill="#7a7a7a"/><rect x="27" y="222" width="1" height="1" fill="#7a7a7a"/><rect x="19" y="238" width="1" height="1" fill="#7a7a7a"/><rect x="21" y="238" width="1" height="1" fill="#7a7a7a"/><rect x="23" y="238" width="1" height="1" fill="#7a7a7a"/><rect x="25" y="238" width="1" height="1" fill="#7a7a7a"/><rect x="27" y="238" width="1" height="1" fill="#7a7a7a"/><rect x="38" y="254" width="1" height="1" fill="#7a7a7a"/><rect x="40" y="254" width="1" height="1" fill="#7a7a7a"/><rect x="42" y="254" width="1" height="1" fill="#7a7a7a"/><rect x="44" y="254" width="1" height="1" fill="#7a7a7a"/><rect x="46" y="254" width="1" height="1" fill="#7a7a7a"/><rect x="38" y="270" width="1" height="1" fill="#7a7a7a"/><rect x="40" y="270" width="1" height="1" fill="#7a7a7a"/><rect x="42" y="270" width="1" height="1" fill="#7a7a7a"/><rect x="44" y="270" width="1" height="1" fill="#7a7a7a"/><rect x="46" y="270" width="1" height="1" fill="#7a7a7a"/><rect x="38" y="286" width="1" height="1" fill="#7a7a7a"/><rect x="40" y="286" width="1" height="1" fill="#7a7a7a"/><rect x="42" y="286" width="1" height="1" fill="#7a7a7a"/><rect x="44" y="286" width="1" height="1" fill="#7a7a7a"/><rect x="46" y="286" width="1" height="1" fill="#7a7a7a"/><rect x="38" y="302" width="1" height="1" fill="#7a7a7a"/><rect x="40" y="302" width="1" height="1" fill="#7a7a7a"/><rect x="42" y="302" width="1" height="1" fill="#7a7a7a"/><rect x="44" y="302" width="1" height="1" fill="#7a7a7a"/><rect x="46" y="302" width="1" height="1" fill="#7a7a7a"/><rect x="57" y="318" width="1" height="1" fill="#7a7a7a"/><rect x="59" y="318" width="1" height="1" fill="#7a7a7a"/><rect x="61" y="318" width="1" height="1" fill="#7a7a7a"/><rect x="63" y="318" width="1" height="1" fill="#7a7a7a"/><rect x="65" y="318" width="1" height="1" fill="#7a7a7a"/><rect x="38" y="334" width="1" height="1" fill="#7a7a7a"/><rect x="40" y="334" width="1" height="1" fill="#7a7a7a"/><rect x="42" y="334" width="1" height="1" fill="#7a7a7a"/><rect x="44" y="334" width="1" height="1" fill="#7a7a7a"/><rect x="46" y="334" width="1" height="1" fill="#7a7a7a"/><rect x="38" y="350" width="1" height="1" fill="#7a7a7a"/><rect x="40" y="350" width="1" height="1" fill="#7a7a7a"/><rect x="42" y="350" width="1" height="1" fill="#7a7a7a"/><rect x="44" y="350" width="1" height="1" fill="#7a7a7a"/><rect x="46" y="350" width="1" height="1" fill="#7a7a7a"/><rect x="38" y="366" width="1" height="1" fill="#7a7a7a"/><rect x="40" y="366" width="1" height="1" fill="#7a7a7a"/><rect x="42" y="366" width="1" height="1" fill="#7a7a7a"/><rect x="44" y="366" width="1" height="1" fill="#7a7a7a"/><rect x="46" y="366" width="1" height="1" fill="#7a7a7a"/><rect x="38" y="382" width="1" height="1" fill="#7a7a7a"/><rect x="40" y="382" width="1" height="1" fill="#7a7a7a"/><rect x="42" y="382" width="1" height="1" fill="#7a7a7a"/><rect x="44" y="382" width="1" height="1" fill="#7a7a7a"/><rect x="46" y="382" width="1" height="1" fill="#7a7a7a"/><rect x="19" y="398" width="1" height="1" fill="#7a7a7a"/><rect x="21" y="398" width="1" height="1" fill="#7a7a7a"/><rect x="23" y="398" width="1" height="1" fill="#7a7a7a"/><rect x="25" y="398" width="1" height="1" fill="#7a7a7a"/><rect x="27" y="398" width="1" height="1" fill="#7a7a7a"/><rect x="19" y="414" width="1" height="1" fill="#7a7a7a"/><rect x="21" y="414" width="1" height="1" fill="#7a7a7a"/><rect x="23" y="414" width="1" height="1" fill="#7a7a7a"/><rect x="25" y="414" width="1" height="1" fill="#7a7a7a"/><rect x="27" y="414" width="1" height="1" fill="#7a7a7a"/><rect x="19" y="430" width="1" height="1" fill="#7a7a7a"/><rect x="21" y="430" width="1" height="1" fill="#7a7a7a"/><rect x="23" y="430" width="1" height="1" fill="#7a7a7a"/><rect x="25" y="430" width="1" height="1" fill="#7a7a7a"/><rect x="27" y="430" width="1" height="1" fill="#7a7a7a"/><rect x="19" y="446" width="1" height="1" fill="#7a7a7a"/><rect x="21" y="446" width="1" height="1" fill="#7a7a7a"/><rect x="23" y="446" width="1" height="1" fill="#7a7a7a"/><rect x="25" y="446" width="1" height="1" fill="#7a7a7a"/><rect x="27" y="446" width="1" height="1" fill="#7a7a7a"/><rect x="38" y="462" width="1" height="1" fill="#7a7a7a"/><rect x="40" y="462" width="1" height="1" fill="#7a7a7a"/><rect x="42" y="462" width="1" height="1" fill="#7a7a7a"/><rect x="44" y="462" width="1" height="1" fill="#7a7a7a"/><rect x="46" y="462" width="1" height="1" fill="#7a7a7a"/><rect x="38" y="478" width="1" height="1" fill="#7a7a7a"/><rect x="40" y="478" width="1" height="1" fill="#7a7a7a"/><rect x="42" y="478" width="1" height="1" fill="#7a7a7a"/><rect x="44" y="478" width="1" height="1" fill="#7a7a7a"/><rect x="46" y="478" width="1" height="1" fill="#7a7a7a"/><rect x="38" y="494" width="1" height="1" fill="#7a7a7a"/><rect x="40" y="494" width="1" height="1" fill="#7a7a7a"/><rect x="42" y="494" width="1" height="1" fill="#7a7a7a"/><rect x="44" y="494" width="1" height="1" fill="#7a7a7a"/><rect x="46" y="494" width="1" height="1" fill="#7a7a7a"/><rect x="19" y="510" width="1" height="1" fill="#7a7a7a"/><rect x="21" y="510" width="1" height="1" fill="#7a7a7a"/><rect x="23" y="510" width="1" height="1" fill="#7a7a7a"/><rect x="25" y="510" width="1" height="1" fill="#7a7a7a"/><rect x="27" y="510" width="1" height="1" fill="#7a7a7a"/><rect x="38" y="526" width="1" height="1" fill="#7a7a7a"/><rect x="40" y="526" width="1" height="1" fill="#7a7a7a"/><rect x="42" y="526" width="1" height="1" fill="#7a7a7a"/><rect x="44" y="526" width="1" height="1" fill="#7a7a7a"/><rect x="46" y="526" width="1" height="1" fill="#7a7a7a"/><rect x="57" y="542" width="1" height="1" fill="#7a7a7a"/><rect x="59" y="542" width="1" height="1" fill="#7a7a7a"/><rect x="61" y="542" width="1" height="1" fill="#7a7a7a"/><rect x="63" y="542" width="1" height="1" fill="#7a7a7a"/><rect x="65" y="542" width="1" height="1" fill="#7a7a7a"/><rect x="14.5" y="234.5" width="8" height="8" fill="url(#eg)" stroke="#8a8a8a" stroke-width="1"/><rect x="16" y="238" width="5" height="1" fill="#2a4aa0"/><rect x="33.5" y="250.5" width="8" height="8" fill="url(#eg)" stroke="#8a8a8a" stroke-width="1"/><rect x="35" y="254" width="5" height="1" fill="#2a4aa0"/><rect x="37" y="252" width="1" height="5" fill="#2a4aa0"/><rect x="33.5" y="266.5" width="8" height="8" fill="url(#eg)" stroke="#8a8a8a" stroke-width="1"/><rect x="35" y="270" width="5" height="1" fill="#2a4aa0"/><rect x="37" y="268" width="1" height="5" fill="#2a4aa0"/><rect x="33.5" y="282.5" width="8" height="8" fill="url(#eg)" stroke="#8a8a8a" stroke-width="1"/><rect x="35" y="286" width="5" height="1" fill="#2a4aa0"/><rect x="37" y="284" width="1" height="5" fill="#2a4aa0"/><rect x="33.5" y="298.5" width="8" height="8" fill="url(#eg)" stroke="#8a8a8a" stroke-width="1"/><rect x="35" y="302" width="5" height="1" fill="#2a4aa0"/><rect x="33.5" y="330.5" width="8" height="8" fill="url(#eg)" stroke="#8a8a8a" stroke-width="1"/><rect x="35" y="334" width="5" height="1" fill="#2a4aa0"/><rect x="37" y="332" width="1" height="5" fill="#2a4aa0"/><rect x="33.5" y="346.5" width="8" height="8" fill="url(#eg)" stroke="#8a8a8a" stroke-width="1"/><rect x="35" y="350" width="5" height="1" fill="#2a4aa0"/><rect x="37" y="348" width="1" height="5" fill="#2a4aa0"/><rect x="33.5" y="362.5" width="8" height="8" fill="url(#eg)" stroke="#8a8a8a" stroke-width="1"/><rect x="35" y="366" width="5" height="1" fill="#2a4aa0"/><rect x="37" y="364" width="1" height="5" fill="#2a4aa0"/><rect x="33.5" y="378.5" width="8" height="8" fill="url(#eg)" stroke="#8a8a8a" stroke-width="1"/><rect x="35" y="382" width="5" height="1" fill="#2a4aa0"/><rect x="37" y="380" width="1" height="5" fill="#2a4aa0"/><rect x="14.5" y="394.5" width="8" height="8" fill="url(#eg)" stroke="#8a8a8a" stroke-width="1"/><rect x="16" y="398" width="5" height="1" fill="#2a4aa0"/><rect x="18" y="396" width="1" height="5" fill="#2a4aa0"/><rect x="14.5" y="410.5" width="8" height="8" fill="url(#eg)" stroke="#8a8a8a" stroke-width="1"/><rect x="16" y="414" width="5" height="1" fill="#2a4aa0"/><rect x="18" y="412" width="1" height="5" fill="#2a4aa0"/><rect x="14.5" y="426.5" width="8" height="8" fill="url(#eg)" stroke="#8a8a8a" stroke-width="1"/><rect x="16" y="430" width="5" height="1" fill="#2a4aa0"/><rect x="18" y="428" width="1" height="5" fill="#2a4aa0"/><rect x="14.5" y="442.5" width="8" height="8" fill="url(#eg)" stroke="#8a8a8a" stroke-width="1"/><rect x="16" y="446" width="5" height="1" fill="#2a4aa0"/><rect x="14.5" y="506.5" width="8" height="8" fill="url(#eg)" stroke="#8a8a8a" stroke-width="1"/><rect x="16" y="510" width="5" height="1" fill="#2a4aa0"/><rect x="33.5" y="522.5" width="8" height="8" fill="url(#eg)" stroke="#8a8a8a" stroke-width="1"/><rect x="35" y="526" width="5" height="1" fill="#2a4aa0"/></svg>
<div style="position:absolute;left:810px;top:27px;width:1px;height:892px;background:#2a2a2d"></div>
<div style="position:absolute;left:811px;top:27px;width:1px;height:892px;background:#222224"></div>
<div style="position:absolute;left:812px;top:27px;width:2px;height:892px;background:#2d2d30"></div>
<div style="position:absolute;left:255px;top:83px;width:550px;height:21px;background:#2d2d30"></div>
<div style="position:absolute;left:255px;top:103px;width:550px;height:775px;border:1px solid #777"></div>
<div style="position:absolute;left:256px;top:104px;width:548px;height:773px;border-left:1px solid #28282b;border-top:1px solid #28282b"></div>
<div style="position:absolute;left:343px;top:85px;width:82px;height:20px;background:#333337;border:1px solid #6a6a6a;border-bottom:none"></div>
<div style="position:absolute;left:261px;top:87.0px;line-height:14px;font-size:11px;color:#f1f1f1;white-space:nowrap;text-align:left;letter-spacing:0px">Time</div>
<div style="position:absolute;left:297px;top:87.0px;line-height:14px;font-size:11px;color:#f1f1f1;white-space:nowrap;text-align:left;letter-spacing:0.7px">Control</div>
<div style="position:absolute;left:349px;top:87.5px;line-height:14px;font-size:11px;color:#3ea6ee;white-space:nowrap;text-align:left;letter-spacing:0.1px">ResourceRole</div>
<div style="position:absolute;left:432px;top:87.0px;line-height:14px;font-size:11px;color:#f1f1f1;white-space:nowrap;text-align:left;letter-spacing:0.2px">Cost</div>
<div style="position:absolute;left:468px;top:87.0px;line-height:14px;font-size:11px;color:#f1f1f1;white-space:nowrap;text-align:left;letter-spacing:0.2px">Properties</div>
<div style="position:absolute;left:533px;top:87.0px;line-height:14px;font-size:11px;color:#f1f1f1;white-space:nowrap;text-align:left;letter-spacing:0.3px">Priority</div>
<div style="position:absolute;left:267px;top:131px;width:522px;height:165px;border:1px solid #737373;border-radius:3px"></div>
<div style="position:absolute;left:273px;top:128px;width:165px;height:6px;background:#333337"></div>
<div style="position:absolute;left:276px;top:124.5px;line-height:14px;font-size:10.6px;color:#f1f1f1;white-space:nowrap;text-align:left;letter-spacing:0px">Resource Roles defined in BPMN</div>
<div style="position:absolute;left:276px;top:144px;width:504px;height:98px;border:1px solid #777;background:#2d2d30"></div>
<div style="position:absolute;left:278px;top:146px;width:500px;height:22px;background:#005a9e;border-top:1px solid #4a6a90;border-left:1px solid #4a6a90;border-right:1px solid #9a9a9a"></div>
<div style="position:absolute;left:376px;top:146px;width:2px;height:22px;background:#8a8580"></div>
<div style="position:absolute;left:526px;top:146px;width:2px;height:22px;background:#8a8580"></div>
<div style="position:absolute;left:676px;top:146px;width:2px;height:22px;background:#8a8580"></div>
<div style="position:absolute;left:278px;top:169px;width:500px;height:20px;border:1px solid #f0a060;background:#005a9e;border-right-color:#d8d8d8"></div>
<div style="position:absolute;left:377px;top:169px;width:150px;height:20px;border:1px solid #9a9a9a;background:#2d2d30"></div>
<div style="position:absolute;left:676px;top:170px;width:1px;height:18px;background:#1e1e1e"></div>
<div style="position:absolute;left:283px;top:151.0px;line-height:14px;font-size:11px;color:#f1f1f1;white-space:nowrap;text-align:left;">Type</div>
<div style="position:absolute;left:382px;top:151.0px;line-height:14px;font-size:11px;color:#f1f1f1;white-space:nowrap;text-align:left;">Role(Name)</div>
<div style="position:absolute;left:532px;top:151.0px;line-height:14px;font-size:11px;color:#f1f1f1;white-space:nowrap;text-align:left;">BPMN Resource</div>
<div style="position:absolute;left:682px;top:151.0px;line-height:14px;font-size:11px;color:#f1f1f1;white-space:nowrap;text-align:left;letter-spacing:0.15px">Quantity</div>
<div style="position:absolute;left:281px;top:171.5px;line-height:14px;font-size:11px;color:#f1f1f1;white-space:nowrap;text-align:left;">ResourceRole</div>
<div style="position:absolute;left:380px;top:171.5px;line-height:14px;font-size:11px;color:#f1f1f1;white-space:nowrap;text-align:left;">ResourceRole</div>
<div style="position:absolute;left:530px;top:172.5px;line-height:14px;font-size:11px;color:#f1f1f1;white-space:nowrap;text-align:left;">Clerk</div>
<div style="position:absolute;left:679.5px;top:171.5px;line-height:14px;font-size:11px;color:#f1f1f1;white-space:nowrap;text-align:left;">1</div>
<div style="position:absolute;left:663px;top:259px;width:105px;height:24px;border:1px solid #b0b0b0;background:#2d2d30"></div>
<div style="position:absolute;left:669px;top:264.0px;line-height:14px;font-size:10.6px;color:#f1f1f1;white-space:nowrap;text-align:left;letter-spacing:0.1px">Add Resource Role</div>
<div style="position:absolute;left:267px;top:312px;width:522px;height:447px;border:1px solid #737373;border-radius:3px"></div>
<div style="position:absolute;left:273px;top:309px;width:219px;height:6px;background:#333337"></div>
<div style="position:absolute;left:276px;top:305.0px;line-height:14px;font-size:10.6px;color:#f1f1f1;white-space:nowrap;text-align:left;letter-spacing:0.1px">Advanced Overide for Single Resource Role</div>
<svg style="position:absolute;left:288px;top:322px" width="100" height="16">
<circle cx="8" cy="7.5" r="5.5" fill="none" stroke="#c8c8c8" stroke-width="1"/>
<circle cx="8" cy="7.5" r="3" fill="#c8c8c8"/>
<circle cx="69" cy="7.5" r="5.5" fill="none" stroke="#c8c8c8" stroke-width="1"/>
</svg>
<div style="position:absolute;left:305px;top:322.5px;line-height:14px;font-size:11px;color:#f1f1f1;white-space:nowrap;text-align:left;">AND</div>
<div style="position:absolute;left:366px;top:322.5px;line-height:14px;font-size:11px;color:#f1f1f1;white-space:nowrap;text-align:left;">OR</div>
<div style="position:absolute;left:276px;top:346px;width:505px;height:405px;border:1px solid #777;background:#2d2d30"></div>
<div style="position:absolute;left:278px;top:348px;width:501px;height:1px;background:#bdbdbd"></div>
<div style="position:absolute;left:278px;top:370px;width:501px;height:1px;background:#bdbdbd"></div>
<div style="position:absolute;left:402px;top:352px;width:1px;height:15px;background:#6a6a6a"></div>
<div style="position:absolute;left:652px;top:352px;width:1px;height:15px;background:#6a6a6a"></div>
<div style="position:absolute;left:778px;top:352px;width:2px;height:15px;background:#8a8a8a"></div>
<div style="position:absolute;left:283px;top:353.0px;line-height:14px;font-size:11px;color:#f1f1f1;white-space:nowrap;text-align:left;letter-spacing:0.3px">Selection Type</div>
<div style="position:absolute;left:408px;top:353.0px;line-height:14px;font-size:11px;color:#f1f1f1;white-space:nowrap;text-align:left;letter-spacing:0.3px">Resource or Role</div>
<div style="position:absolute;left:658px;top:353.0px;line-height:14px;font-size:11px;color:#f1f1f1;white-space:nowrap;text-align:left;letter-spacing:0.3px">Quantity Required</div>
<div style="position:absolute;left:281px;top:373.0px;line-height:14px;font-size:11px;color:#f1f1f1;white-space:nowrap;text-align:left;letter-spacing:0.1px">Resource</div>
<div style="position:absolute;left:406px;top:373.0px;line-height:14px;font-size:11px;color:#f1f1f1;white-space:nowrap;text-align:left;letter-spacing:0.3px">Warehouse Worker</div>
<div style="position:absolute;left:655px;top:373.0px;line-height:14px;font-size:11px;color:#f1f1f1;white-space:nowrap;text-align:left;"></div>
<div style="position:absolute;left:281px;top:393.0px;line-height:14px;font-size:11px;color:#f1f1f1;white-space:nowrap;text-align:left;letter-spacing:0.1px">Resource</div>
<div style="position:absolute;left:406px;top:393.0px;line-height:14px;font-size:11px;color:#f1f1f1;white-space:nowrap;text-align:left;letter-spacing:0.3px">Logistics Manager</div>
<div style="position:absolute;left:655px;top:393.0px;line-height:14px;font-size:11px;color:#f1f1f1;white-space:nowrap;text-align:left;"></div>
<div style="position:absolute;left:281px;top:413.0px;line-height:14px;font-size:11px;color:#f1f1f1;white-space:nowrap;text-align:left;letter-spacing:0.1px">Resource</div>
<div style="position:absolute;left:406px;top:413.0px;line-height:14px;font-size:11px;color:#f1f1f1;white-space:nowrap;text-align:left;letter-spacing:0.3px">Clerk</div>
<div style="position:absolute;left:655px;top:413.0px;line-height:14px;font-size:11px;color:#f1f1f1;white-space:nowrap;text-align:left;">1</div>
<div style="position:absolute;left:281px;top:433.0px;line-height:14px;font-size:11px;color:#f1f1f1;white-space:nowrap;text-align:left;letter-spacing:0.1px">Role</div>
<div style="position:absolute;left:406px;top:433.0px;line-height:14px;font-size:11px;color:#f1f1f1;white-space:nowrap;text-align:left;letter-spacing:0.3px"></div>
<div style="position:absolute;left:655px;top:433.0px;line-height:14px;font-size:11px;color:#f1f1f1;white-space:nowrap;text-align:left;"></div>
<div style="position:absolute;left:267px;top:777px;width:522px;height:82px;border:1px solid #737373;border-radius:3px"></div>
<div style="position:absolute;left:273px;top:774px;width:208px;height:6px;background:#333337"></div>
<div style="position:absolute;left:276px;top:770.0px;line-height:14px;font-size:10.6px;color:#f1f1f1;white-space:nowrap;text-align:left;letter-spacing:0px">Resource Selection Expression for Activity:</div>
<div style="position:absolute;left:276px;top:795px;width:504px;height:55px;border:1px solid #8a8a8a;background:#2d2d30"></div>
<div style="position:absolute;left:281px;top:798.0px;line-height:14px;font-size:10.8px;color:#f1f1f1;white-space:nowrap;text-align:left;letter-spacing:0.1px">bpsim:getResource(&#x27;Clerk&#x27;,1)</div>
<div style="position:absolute;left:491px;top:890px;width:75px;height:23px;border:1px solid #a0a0a0;background:#2d2d30"></div>
<div style="position:absolute;left:491px;top:894.5px;line-height:14px;font-size:11px;color:#7a7a7a;white-space:nowrap;text-align:center;width:75px;">Save</div>
<div style="position:absolute;left:570px;top:890px;width:75px;height:23px;border:1px solid #a0a0a0;background:#2d2d30"></div>
<div style="position:absolute;left:570px;top:894.5px;line-height:14px;font-size:11px;color:#f1f1f1;white-space:nowrap;text-align:center;width:75px;">Export</div>
<div style="position:absolute;left:650px;top:890px;width:75px;height:23px;border:1px solid #a0a0a0;background:#2d2d30"></div>
<div style="position:absolute;left:650px;top:894.5px;line-height:14px;font-size:11px;color:#f1f1f1;white-space:nowrap;text-align:center;width:75px;">Run</div>
<div style="position:absolute;left:729px;top:890px;width:75px;height:23px;border:1px solid #a0a0a0;background:#2d2d30"></div>
<div style="position:absolute;left:729px;top:894.5px;line-height:14px;font-size:11px;color:#f1f1f1;white-space:nowrap;text-align:center;width:75px;">Help</div>
<div style="position:absolute;left:814px;top:27px;width:1105px;height:1px;background:#8a8a8a"></div>
<div style="position:absolute;left:814px;top:27px;width:1px;height:892px;background:#9a9a9a"></div>
<div style="position:absolute;left:814px;top:918px;width:1105px;height:1px;background:#8a8a8a"></div>
<div style="position:absolute;left:815px;top:54px;width:1104px;height:1px;background:#8a8a8a"></div>
<div style="position:absolute;left:876px;top:35.0px;line-height:14px;font-size:10.8px;color:#f1f1f1;white-space:nowrap;text-align:left;letter-spacing:-0.1px">Business Process Diagram: &quot;Hardware Retailer&quot;</div>
<svg style="position:absolute;left:815px;top:28px" width="50" height="26">
<path d="M7.5 10 L11 13.5 L7.5 17 M11.5 10 L15 13.5 L11.5 17" stroke="#f1f1f1" stroke-width="1.3" fill="none"/>
<rect x="26.5" y="6.5" width="5" height="4" fill="#9ad0f8" stroke="#4a6ad0" stroke-width="0.8"/>
<rect x="33.5" y="6.5" width="5" height="4" fill="#9ad0f8" stroke="#4a6ad0" stroke-width="0.8"/>
<path d="M26 12.5 H36 L39.5 15.5 L36 18.5 H26 L29.5 15.5 Z" fill="#7ac0ee" stroke="#6070c8" stroke-width="0.8"/>
</svg>
<svg style="position:absolute;left:1850px;top:34px" width="69" height="16">
<path d="M4 8 L8 4 L12 8 M4 12 L8 8 L12 12" stroke="#f1f1f1" stroke-width="1.5" fill="none"/>
<path d="M32 6 H40 L36 10 Z" fill="#f1f1f1"/>
<path d="M54 4.5 L61 11.5 M61 4.5 L54 11.5" stroke="#f1f1f1" stroke-width="1.8"/>
</svg>
<div style="position:absolute;left:815px;top:76px;width:81px;height:1px;background:#7a7a7a"></div>
<div style="position:absolute;left:1035px;top:76px;width:884px;height:1px;background:#7a7a7a"></div>
<div style="position:absolute;left:895px;top:56px;width:141px;height:21px;border:1px solid #7a7a7a;border-bottom:none"></div>
<svg style="position:absolute;left:815px;top:55px" width="110" height="22">
<circle cx="11" cy="11" r="8" fill="#1414f0"/>
<circle cx="11" cy="11" r="5.6" fill="none" stroke="#fff" stroke-width="1.4"/>
<path d="M7 7 L15 15 M15 7 L7 15" stroke="#fff" stroke-width="1.4"/>
<rect x="86.5" y="5.5" width="5" height="4" fill="#9ad0f8" stroke="#4a6ad0" stroke-width="0.8"/>
<rect x="93.5" y="5.5" width="5" height="4" fill="#9ad0f8" stroke="#4a6ad0" stroke-width="0.8"/>
<path d="M85 11.5 H95 L98.5 14.5 L95 17.5 H85 L88.5 14.5 Z" fill="#7ac0ee" stroke="#6070c8" stroke-width="0.8"/>
</svg>
<div style="position:absolute;left:836px;top:60.0px;line-height:14px;font-size:11px;color:#f1f1f1;white-space:nowrap;text-align:left;">Start Page</div>
<div style="position:absolute;left:917px;top:60.0px;line-height:14px;font-size:10.75px;color:#1ba1e8;white-space:nowrap;text-align:left;font-weight:bold">Hardware Retailer</div>
<svg style="position:absolute;left:1018px;top:61px" width="14" height="14">
<path d="M3 3 L10 10 M10 3 L3 10" stroke="#f1f1f1" stroke-width="1.6"/>
</svg>
<svg style="position:absolute;left:1885px;top:60px" width="34" height="12">
<path d="M9 1 L4 6 L9 11 Z" fill="none" stroke="#d0d0d0" stroke-width="1"/>
<path d="M23 1 L28 6 L23 11 Z" fill="none" stroke="#d0d0d0" stroke-width="1"/>
</svg>
<svg style="position:absolute;left:0;top:0" width="1919" height="102"><text x="820" y="94" font-family="Liberation Serif" font-size="15" fill="#1c1c80">A</text><text x="844" y="91" font-family="Liberation Sans" font-size="11" fill="#111">A</text><rect x="850" y="82" width="4" height="4" fill="#c040c0"/><rect x="854" y="82" width="4" height="4" fill="#d0b040"/><rect x="853" y="86" width="4" height="4" fill="#40c0c0"/><rect x="844" y="93" width="15" height="4" fill="#8c8c8c"/><path d="M866 89 H872 L869 92 Z" fill="#f1f1f1"/><path d="M881 84 L886 80 L891 85 L886 90 Z" fill="#7080b0"/><path d="M891 83 V90 M889 90 H893" stroke="#3050b0" stroke-width="1.2"/><rect x="879" y="93" width="15" height="4" fill="#8c8c8c"/><path d="M901 89 H907 L904 92 Z" fill="#f1f1f1"/><line x1="915" y1="87" x2="928" y2="82" stroke="#3040a0" stroke-width="1"/><rect x="914" y="89" width="4" height="3" fill="#c040c0"/><rect x="919" y="89" width="4" height="3" fill="#40c0c0"/><rect x="924" y="89" width="4" height="3" fill="#d0b040"/><rect x="914" y="93" width="15" height="4" fill="#8c8c8c"/><path d="M936 89 H942 L939 92 Z" fill="#f1f1f1"/><rect x="948" y="78" width="1" height="21" fill="#6a6a6a"/><text x="957" y="92" font-family="Liberation Sans" font-size="10" fill="#8a8a70">1</text><rect x="982.5" y="81.5" width="16" height="7" fill="none" stroke="#8a8a8a"/><rect x="982.5" y="89.5" width="16" height="7" fill="none" stroke="#8a8a8a"/><path d="M987 86 H994 L990.5 83 Z" fill="#f1f1f1"/><path d="M987 91.5 H994 L990.5 94.5 Z" fill="#f1f1f1"/><path d="M1005 96 L1012 96 L1016 90 L1011 86 Z" fill="#d0b030"/><path d="M1012 88 L1020 81" stroke="#4a7ab0" stroke-width="2.5"/><path d="M1028 95 L1041 83" stroke="#5080b0" stroke-width="2.5"/><path d="M1027 96 L1035 96" stroke="#30a0c0" stroke-width="1"/><rect x="1050" y="78" width="1" height="21" fill="#6a6a6a"/><rect x="1055.5" y="78.5" width="147" height="20" fill="#2a2a2d" stroke="#47474b"/><path d="M1192 88 H1199 L1195.5 91 Z" fill="#8a8a8a"/><rect x="1210" y="84" width="9" height="9" fill="#3a3ad0"/><rect x="1212" y="84" width="5" height="3" fill="#d0d0f0"/><path d="M1216 94 L1224 83" stroke="#e0b020" stroke-width="3"/><path d="M1231 89 H1237 L1234 92 Z" fill="#f1f1f1"/><rect x="1243" y="78" width="1" height="21" fill="#6a6a6a"/><path d="M1251.5 82 V96" stroke="#404868" stroke-width="1"/><rect x="1254" y="84" width="6" height="3" fill="#b4bccc"/><rect x="1254" y="90.5" width="4" height="4" fill="#b4bccc"/><path d="M1254 90.5 L1258 94.5 M1258 90.5 L1254 94.5" stroke="#6a7088" stroke-width="0.6"/><path d="M1261 85.5 H1266 M1261 85.5 L1263 84 M1261 85.5 L1263 87 M1259 92.5 H1266 M1259 92.5 L1261 91 M1259 92.5 L1261 94" stroke="#404868" stroke-width="0.8" fill="none"/><path d="M1286.5 82 V96" stroke="#404868" stroke-width="1"/><rect x="1280" y="84" width="6" height="3" fill="#b4bccc"/><rect x="1281" y="90.5" width="4" height="4" fill="#b4bccc"/><path d="M1281 90.5 L1285 94.5 M1285 90.5 L1281 94.5" stroke="#6a7088" stroke-width="0.6"/><path d="M1272 85.5 H1278 M1278 85.5 L1276 84 M1278 85.5 L1276 87 M1272 92.5 H1279 M1279 92.5 L1277 91 M1279 92.5 L1277 94" stroke="#404868" stroke-width="0.8" fill="none"/><path d="M1294 82.5 H1308" stroke="#404868" stroke-width="1"/><rect x="1295" y="84.5" width="4" height="4" fill="#b4bccc"/><path d="M1295 84.5 L1299 88.5 M1299 84.5 L1295 88.5" stroke="#6a7088" stroke-width="0.6"/><rect x="1302" y="85" width="6" height="3" fill="#b4bccc"/><path d="M1297 90 V96 M1297 90 L1295.5 92 M1297 90 L1298.5 92 M1304.5 90 V96 M1304.5 90 L1303 92 M1304.5 90 L1306 92" stroke="#404868" stroke-width="0.8" fill="none"/><path d="M1316 95.5 H1331" stroke="#404868" stroke-width="1"/><rect x="1317" y="90" width="4" height="4" fill="#b4bccc"/><path d="M1317 90 L1321 94 M1321 90 L1317 94" stroke="#6a7088" stroke-width="0.6"/><rect x="1324" y="91" width="6" height="3" fill="#b4bccc"/><path d="M1319 82 V88 M1319 88 L1317.5 86 M1319 88 L1320.5 86 M1327 82 V88 M1327 88 L1325.5 86 M1327 88 L1328.5 86" stroke="#404868" stroke-width="0.8" fill="none"/><rect x="1340" y="83" width="7" height="7" fill="#6070a8"/><rect x="1343" y="86" width="8" height="7" fill="#c8b878"/><rect x="1348" y="91" width="5" height="5" fill="#6070a8"/><rect x="1362" y="83" width="6" height="6" fill="#6070a8"/><rect x="1366" y="87" width="5" height="5" fill="#c8b878"/><rect x="1369" y="90" width="6" height="6" fill="#6070a8"/><rect x="1383" y="78" width="1" height="21" fill="#6a6a6a"/><path d="M1394 90 H1407 M1400 83 V97 M1396 84 L1404 96 M1404 84 L1396 96" stroke="#5a5a8a" stroke-width="1" stroke-dasharray="1.5 1"/><path d="M1414 89 H1420 L1417 92 Z" fill="#f1f1f1"/><rect x="1425" y="82" width="13" height="14" fill="#4a6aa8"/><rect x="1427" y="89" width="9" height="5" fill="#b0c0d8"/><path d="M1427 86 L1432 82 L1439 84" stroke="#a8a070" stroke-width="2"/><rect x="1448" y="78" width="1" height="21" fill="#6a6a6a"/><path d="M1457 83 L1469 95 M1469 83 L1457 95" stroke="#d02020" stroke-width="1.3"/><rect x="1478" y="78" width="1" height="21" fill="#6a6a6a"/><rect x="1485" y="81" width="114" height="15" fill="#333337"/><path d="M1607 83 H1620 L1615 89 V95 H1612 V89 Z" fill="#7070d0"/><path d="M1910 92 H1916 L1913 95 Z" fill="#f1f1f1"/></svg>
<div style="position:absolute;left:1059px;top:82.0px;line-height:14px;font-size:11.2px;color:#f1f1f1;white-space:nowrap;text-align:left;">Default Style</div>
<svg style="position:absolute;left:0;top:0" width="1919" height="942"><defs><linearGradient id="cbg" x1="0" y1="0" x2="0" y2="1"><stop offset="0" stop-color="#a9b8dc"/><stop offset="1" stop-color="#e8ebf5"/></linearGradient><linearGradient id="task" x1="0" y1="0" x2="0" y2="1"><stop offset="0" stop-color="#fbe9a2"/><stop offset="0.55" stop-color="#f8e290"/><stop offset="1" stop-color="#f3d35e"/></linearGradient><linearGradient id="gw" x1="0" y1="0" x2="0" y2="1"><stop offset="0" stop-color="#c4e484"/><stop offset="1" stop-color="#a2d058"/></linearGradient><pattern id="hatch" width="3" height="3" patternUnits="userSpaceOnUse"><rect width="3" height="3" fill="#f4f4f4"/><path d="M0 3 L3 0 M-1 1 L1 -1 M2 4 L4 2" stroke="#333" stroke-width="0.9"/></pattern><filter id="sh" x="-10%" y="-10%" width="130%" height="130%"><feGaussianBlur in="SourceAlpha" stdDeviation="1"/><feOffset dx="2" dy="2"/><feComponentTransfer><feFuncA type="linear" slope="0.25"/></feComponentTransfer><feMerge><feMergeNode/><feMergeNode in="SourceGraphic"/></feMerge></filter></defs><rect x="815" y="102" width="1087" height="799" fill="url(#cbg)"/><g clip-path="url(#cclip)"><clipPath id="cclip"><rect x="815" y="102" width="1087" height="799"/></clipPath><path d="M817.5 591 V108.5 H1902 M837.5 591 V108.5 M837.5 223.5 H1902 M837.5 426.5 H1902" stroke="#c4c4bc" stroke-width="1" fill="none"/><rect x="818.5" y="109.5" width="1200" height="482" fill="none" stroke="#000" stroke-width="1"/><line x1="838.5" y1="109.5" x2="838.5" y2="591" stroke="#000"/><line x1="838.5" y1="224.5" x2="1919" y2="224.5" stroke="#000"/><line x1="838.5" y1="427.5" x2="1919" y2="427.5" stroke="#000"/><text x="828" y="350" transform="rotate(-90 828 350)" text-anchor="middle" font-family="Liberation Sans" font-size="10.4" font-weight="normal" letter-spacing="0.15" fill="#000" stroke="#000" stroke-width="0.15" dominant-baseline="central">Hardware Retailer</text><text x="848" y="167.5" transform="rotate(-90 848 167.5)" text-anchor="middle" font-family="Liberation Sans" font-size="10.4" font-weight="normal" letter-spacing="0.36" fill="#000" stroke="#000" stroke-width="0.15" dominant-baseline="central">Logistics Manager</text><text x="848" y="325.5" transform="rotate(-90 848 325.5)" text-anchor="middle" font-family="Liberation Sans" font-size="10.4" font-weight="normal" letter-spacing="0" fill="#000" stroke="#000" stroke-width="0.15" dominant-baseline="central">Clerk</text><text x="848" y="510" transform="rotate(-90 848 510)" text-anchor="middle" font-family="Liberation Sans" font-size="10" font-weight="bold" letter-spacing="0.1" fill="#000" stroke="#000" stroke-width="0.15" dominant-baseline="central">Warehouse Worker</text><path d="M913 351.5 L962.5 351.5" fill="none" stroke="#000" stroke-width="1"/><path d="M962.5 351.5 L946.5 358.0 L946.5 345.0 Z" fill="#000"/><path d="M1004 351.5 L1043.5 351.5" fill="none" stroke="#000" stroke-width="1"/><path d="M1043.5 351.5 L1027.5 358.0 L1027.5 345.0 Z" fill="#000"/><path d="M1152.5 349.5 L1185.5 349.5" fill="none" stroke="#000" stroke-width="1"/><path d="M1185.5 349.5 L1169.5 356.0 L1169.5 343.0 Z" fill="#000"/><path d="M1206.5 328.5 L1206.5 279.5 Q1206.5 274.5 1211.5 274.5 L1244.5 274.5" fill="none" stroke="#000" stroke-width="1"/><path d="M1244.5 274.5 L1228.5 281.0 L1228.5 268.0 Z" fill="#000"/><path d="M1227.5 349.5 L1341.5 349.5" fill="none" stroke="#000" stroke-width="1"/><path d="M1341.5 349.5 L1325.5 356.0 L1325.5 343.0 Z" fill="#000"/><path d="M1354 270.5 L1386.5 270.5" fill="none" stroke="#000" stroke-width="1"/><path d="M1386.5 270.5 L1370.5 277.0 L1370.5 264.0 Z" fill="#000"/><path d="M1407.5 249.5 L1407.5 167.5 Q1407.5 162.5 1412.5 162.5 L1451.5 162.5" fill="none" stroke="#000" stroke-width="1"/><path d="M1451.5 162.5 L1435.5 169.0 L1435.5 156.0 Z" fill="#000"/><path d="M1428.5 270.5 L1469.5 270.5" fill="none" stroke="#000" stroke-width="1"/><path d="M1469.5 270.5 L1453.5 277.0 L1453.5 264.0 Z" fill="#000"/><path d="M1561 159.5 L1638.5 159.5 Q1643.5 159.5 1643.5 164.5 L1643.5 255.5" fill="none" stroke="#000" stroke-width="1"/><path d="M1643.5 255.5 L1637.0 239.5 L1650.0 239.5 Z" fill="#000"/><path d="M1579 276.5 L1622.5 276.5" fill="none" stroke="#000" stroke-width="1"/><path d="M1622.5 276.5 L1606.5 283.0 L1606.5 270.0 Z" fill="#000"/><path d="M1664.5 276.5 L1699.5 276.5 Q1704.5 276.5 1704.5 281.5 L1704.5 324.5" fill="none" stroke="#000" stroke-width="1"/><path d="M1704.5 324.5 L1698.0 308.5 L1711.0 308.5 Z" fill="#000"/><path d="M1451 348.5 L1487.5 348.5" fill="none" stroke="#000" stroke-width="1"/><path d="M1487.5 348.5 L1471.5 355.0 L1471.5 342.0 Z" fill="#000"/><path d="M1597 345.5 L1683.5 345.5" fill="none" stroke="#000" stroke-width="1"/><path d="M1683.5 345.5 L1667.5 352.0 L1667.5 339.0 Z" fill="#000"/><path d="M1704.5 366.5 L1704.5 457.5" fill="none" stroke="#000" stroke-width="1"/><path d="M1704.5 457.5 L1698.0 441.5 L1711.0 441.5 Z" fill="#000"/><path d="M983.5 372.5 L983.5 466.5 Q983.5 471.5 988.5 471.5 L1042.5 471.5" fill="none" stroke="#000" stroke-width="1"/><path d="M1042.5 471.5 L1026.5 478.0 L1026.5 465.0 Z" fill="#000"/><path d="M1151.5 478.5 L1683.5 478.5" fill="none" stroke="#000" stroke-width="1"/><path d="M1683.5 478.5 L1667.5 485.0 L1667.5 472.0 Z" fill="#000"/><path d="M1725.5 478.5 L1755.5 478.5" fill="none" stroke="#000" stroke-width="1"/><path d="M1755.5 478.5 L1739.5 485.0 L1739.5 472.0 Z" fill="#000"/><path d="M1865 477.5 L1893 477.5" fill="none" stroke="#000" stroke-width="1"/><path d="M1893 477.5 L1877.0 484.0 L1877.0 471.0 Z" fill="#000"/><circle cx="897.8" cy="350.8" r="15" fill="#fa6b6b" stroke="#111" stroke-width="1.2"/><text x="885" y="378.3" text-anchor="start" font-family="Liberation Sans" font-size="10.4" letter-spacing="0.15" fill="#000">Goods to</text><text x="885" y="391.3" text-anchor="start" font-family="Liberation Sans" font-size="10.4" letter-spacing="0.15" fill="#000">ship</text><circle cx="1908" cy="477.5" r="15" fill="#fa6b6b" stroke="#000" stroke-width="3"/><text x="1896" y="502.8" text-anchor="start" font-family="Liberation Sans" font-size="10.4" letter-spacing="0.15" fill="#000">Goods are</text><text x="1896" y="515.8" text-anchor="start" font-family="Liberation Sans" font-size="10.4" letter-spacing="0.15" fill="#000">at pick</text><text x="1896" y="528.8" text-anchor="start" font-family="Liberation Sans" font-size="10.4" letter-spacing="0.15" fill="#000">place</text><path d="M983.5 330.5 L1004.5 351.5 L983.5 372.5 L962.5 351.5 Z" fill="url(#gw)" stroke="#333" stroke-width="1"/><path d="M973.0 351.5 H994.0 M983.5 341.0 V362.0" stroke="#000" stroke-width="5" stroke-linecap="round"/><path d="M1206.5 328.5 L1227.5 349.5 L1206.5 370.5 L1185.5 349.5 Z" fill="url(#gw)" stroke="#333" stroke-width="1"/><path d="M1407.5 249.5 L1428.5 270.5 L1407.5 291.5 L1386.5 270.5 Z" fill="url(#gw)" stroke="#333" stroke-width="1"/><circle cx="1407.5" cy="269.5" r="10" fill="none" stroke="#000" stroke-width="3"/><path d="M1643.5 255.5 L1664.5 276.5 L1643.5 297.5 L1622.5 276.5 Z" fill="url(#gw)" stroke="#333" stroke-width="1"/><circle cx="1643.5" cy="275.5" r="10" fill="none" stroke="#000" stroke-width="3"/><path d="M1704.5 324.5 L1725.5 345.5 L1704.5 366.5 L1683.5 345.5 Z" fill="url(#gw)" stroke="#333" stroke-width="1"/><path d="M1704.5 457.5 L1725.5 478.5 L1704.5 499.5 L1683.5 478.5 Z" fill="url(#gw)" stroke="#333" stroke-width="1"/><path d="M1694.0 478.5 H1715.0 M1704.5 468.0 V489.0" stroke="#000" stroke-width="5" stroke-linecap="round"/><rect x="1036" y="305" width="124" height="79" fill="url(#hatch)"/><rect x="1043.5" y="312.5" width="109.0" height="64.0" rx="5" ry="5" fill="url(#task)" stroke="#000" stroke-width="1" filter="url(#sh)"/><text x="1098.0" y="344.5" text-anchor="middle" font-family="Liberation Sans" font-size="10.4" letter-spacing="0.15" fill="#000">Describe if normal</text><text x="1098.0" y="357.6" text-anchor="middle" font-family="Liberation Sans" font-size="10.4" letter-spacing="0.15" fill="#000">post or special</text><text x="1098.0" y="370.70000000000005" text-anchor="middle" font-family="Liberation Sans" font-size="10.4" letter-spacing="0.15" fill="#000">shipment</text><rect x="1036" y="305" width="8" height="8" fill="#000"/><rect x="1037.3" y="306.3" width="5.4" height="5.4" fill="#fff"/><rect x="1094" y="305" width="8" height="8" fill="#000"/><rect x="1095.3" y="306.3" width="5.4" height="5.4" fill="#fff"/><rect x="1152" y="305" width="8" height="8" fill="#000"/><rect x="1153.3" y="306.3" width="5.4" height="5.4" fill="#fff"/><rect x="1036" y="340" width="8" height="8" fill="#000"/><rect x="1037.3" y="341.3" width="5.4" height="5.4" fill="#fff"/><rect x="1152" y="340" width="8" height="8" fill="#000"/><rect x="1153.3" y="341.3" width="5.4" height="5.4" fill="#fff"/><rect x="1036" y="376" width="8" height="8" fill="#000"/><rect x="1037.3" y="377.3" width="5.4" height="5.4" fill="#fff"/><rect x="1094" y="376" width="8" height="8" fill="#000"/><rect x="1095.3" y="377.3" width="5.4" height="5.4" fill="#fff"/><rect x="1152" y="376" width="8" height="8" fill="#000"/><rect x="1153.3" y="377.3" width="5.4" height="5.4" fill="#fff"/><rect x="1451.5" y="129" width="109.5" height="59.5" rx="5" ry="5" fill="url(#task)" stroke="#000" stroke-width="1" filter="url(#sh)"/><text x="1506.25" y="160.75" text-anchor="middle" font-family="Liberation Sans" font-size="10.4" letter-spacing="0.15" fill="#000">Take out extra</text><text x="1506.25" y="173.85000000000002" text-anchor="middle" font-family="Liberation Sans" font-size="10.4" letter-spacing="0.15" fill="#000">insurance</text><rect x="1244.5" y="240.5" width="109.5" height="59.0" rx="5" ry="5" fill="url(#task)" stroke="#000" stroke-width="1" filter="url(#sh)"/><text x="1299.25" y="271.75" text-anchor="middle" font-family="Liberation Sans" font-size="10.4" letter-spacing="0.15" fill="#000">Check if extra</text><text x="1299.25" y="284.85" text-anchor="middle" font-family="Liberation Sans" font-size="10.4" letter-spacing="0.15" fill="#000">insurance is nessary</text><rect x="1469.5" y="240.5" width="109.5" height="59.0" rx="5" ry="5" fill="url(#task)" stroke="#000" stroke-width="1" filter="url(#sh)"/><text x="1524.25" y="271.8" text-anchor="middle" font-family="Liberation Sans" font-size="10.4" letter-spacing="0.15" fill="#000">Fill in a Post label</text><rect x="1341.5" y="318.5" width="109.5" height="59.0" rx="5" ry="5" fill="url(#task)" stroke="#000" stroke-width="1" filter="url(#sh)"/><text x="1396.25" y="350.25" text-anchor="middle" font-family="Liberation Sans" font-size="10.4" letter-spacing="0.15" fill="#000">Request quotes from</text><text x="1396.25" y="363.35" text-anchor="middle" font-family="Liberation Sans" font-size="10.4" letter-spacing="0.15" fill="#000">carriers</text><rect x="1487.5" y="318.5" width="109.5" height="59.0" rx="5" ry="5" fill="url(#task)" stroke="#000" stroke-width="1" filter="url(#sh)"/><text x="1542.25" y="350.25" text-anchor="middle" font-family="Liberation Sans" font-size="10.4" letter-spacing="0.15" fill="#000">Assign a carrier &amp;</text><text x="1542.25" y="363.35" text-anchor="middle" font-family="Liberation Sans" font-size="10.4" letter-spacing="0.15" fill="#000">prepare paperwork</text><rect x="1042.5" y="444.5" width="109.0" height="59.0" rx="5" ry="5" fill="url(#task)" stroke="#000" stroke-width="1" filter="url(#sh)"/><text x="1097.0" y="476.5" text-anchor="middle" font-family="Liberation Sans" font-size="10.4" letter-spacing="0.15" fill="#000">Package goods</text><rect x="1755.5" y="441.5" width="109.5" height="65.0" rx="5" ry="5" fill="url(#task)" stroke="#000" stroke-width="1" filter="url(#sh)"/><text x="1810.25" y="473.5" text-anchor="middle" font-family="Liberation Sans" font-size="10.4" letter-spacing="0.15" fill="#000">Add paperwork and</text><text x="1810.25" y="486.6" text-anchor="middle" font-family="Liberation Sans" font-size="10.4" letter-spacing="0.15" fill="#000">move package to pick</text><text x="1810.25" y="499.70000000000005" text-anchor="middle" font-family="Liberation Sans" font-size="10.4" letter-spacing="0.15" fill="#000">area</text><text x="1166" y="268.3" text-anchor="start" font-family="Liberation Sans" font-size="10.4" letter-spacing="0.15" fill="#000">Normal Post</text><text x="1172" y="384.3" text-anchor="start" font-family="Liberation Sans" font-size="10.4" letter-spacing="0.15" fill="#000">Mode of delievery</text><text x="1229" y="364.3" text-anchor="start" font-family="Liberation Sans" font-size="10.4" letter-spacing="0.15" fill="#000">Special Carrier</text><text x="1423" y="289.3" text-anchor="start" font-family="Liberation Sans" font-size="10.4" letter-spacing="0.15" fill="#000">Always</text><path d="M1358.5 499.5 H1308.5 V555.5 H1358.5" fill="none" stroke="#000" stroke-width="1"/><text x="1320" y="521.3" text-anchor="start" font-family="Liberation Sans" font-size="10.4" letter-spacing="0.15" fill="#000">Insurance is</text><text x="1320" y="534.3" text-anchor="start" font-family="Liberation Sans" font-size="10.4" letter-spacing="0.15" fill="#000">included in</text><text x="1320" y="547.3" text-anchor="start" font-family="Liberation Sans" font-size="10.4" letter-spacing="0.15" fill="#000">carrier service</text><path d="M1172.5 321 V311" stroke="#fff" stroke-width="3.5"/><path d="M1168 312.5 L1172.5 307.5 L1177 312.5 Z" fill="#000" stroke="#fff" stroke-width="1.2" stroke-linejoin="round"/><path d="M1172.5 321 V312" stroke="#000" stroke-width="1.6"/><path d="M1166.8 331 L1172.5 326.8 L1177.5 329.8 L1177.8 334 L1173.5 336.3 L1170 335.5 Z" fill="none" stroke="#fff" stroke-width="2.6" stroke-linejoin="round"/><path d="M1177 329 L1180 325.5" stroke="#fff" stroke-width="3"/><path d="M1177 329 L1180 325.5" stroke="#000" stroke-width="1.3"/><path d="M1166.8 331 L1172.5 326.8 L1177.5 329.8 L1177.8 334 L1173.5 336.3 L1170 335.5 Z" fill="none" stroke="#000" stroke-width="1" stroke-linejoin="round"/><circle cx="1172.2" cy="345.5" r="4.6" fill="#111" stroke="#fff" stroke-width="2.4"/><circle cx="1172.2" cy="345.5" r="4.6" fill="none" stroke="#000" stroke-width="1"/><path d="M1175.5 349 L1179.5 353" stroke="#000" stroke-width="3.4"/><path d="M1175.8 349.3 L1179.2 352.7" stroke="#fff" stroke-width="1.4"/></g></svg>
<div style="position:absolute;left:1902px;top:102px;width:17px;height:799px;background:#3e3e42"></div>
<svg style="position:absolute;left:1902px;top:102px" width="17" height="799"><path d="M4 11 L8.5 6 L13 11 Z" fill="#999"/><path d="M4 788 L8.5 793 L13 788 Z" fill="#999"/></svg>
<div style="position:absolute;left:1906px;top:119px;width:9px;height:515px;background:#7a7a7a"></div>
<div style="position:absolute;left:815px;top:901px;width:1104px;height:17px;background:#3e3e42"></div>
<svg style="position:absolute;left:815px;top:901px" width="1104" height="18"><path d="M10 4 L5 8.5 L10 13 Z" fill="#999"/><path d="M1076 4 L1081 8.5 L1076 13 Z" fill="#999"/></svg>
<div style="position:absolute;left:831px;top:905px;width:829px;height:9px;background:#7a7a7a"></div>
<div style="position:absolute;left:0px;top:919px;width:1919px;height:23px;background:#007acc"></div>
<div style="position:absolute;left:2px;top:924.0px;line-height:14px;font-size:11.4px;color:#fff;white-space:nowrap;text-align:left;letter-spacing:0.05px">Activity:Describe if normal post or special shipment</div>
<div style="position:absolute;left:272px;top:924.0px;line-height:14px;font-size:11.4px;color:#fff;white-space:nowrap;text-align:left;">Left:</div>
<div style="position:absolute;left:306px;top:924.0px;line-height:14px;font-size:11.4px;color:#fff;white-space:nowrap;text-align:left;">229 x Top:</div>
<div style="position:absolute;left:369px;top:924.0px;line-height:14px;font-size:11.4px;color:#fff;white-space:nowrap;text-align:left;">210 - Width:</div>
<div style="position:absolute;left:443px;top:924.0px;line-height:14px;font-size:11.4px;color:#fff;white-space:nowrap;text-align:left;">110 x Height:</div>
<div style="position:absolute;left:523px;top:924.0px;line-height:14px;font-size:11.4px;color:#fff;white-space:nowrap;text-align:left;">65</div>
<svg style="position:absolute;left:1595px;top:922px" width="130" height="18"><path d="M8 9.5 H15" stroke="#7890a8" stroke-width="1"/><path d="M29 9.5 H113" stroke="#d0dae4" stroke-width="1"/><rect x="25.5" y="3.5" width="4" height="12" fill="#a8a8a8" stroke="#707070" stroke-width="1"/><path d="M124 9.5 H132 M128 5.5 V13.5" stroke="#7890a8" stroke-width="1"/></svg>
<div style="position:absolute;left:1740px;top:924.0px;line-height:14px;font-size:10.6px;color:#7890a8;white-space:nowrap;text-align:left;">CAP</div>
<div style="position:absolute;left:1780px;top:924.0px;line-height:14px;font-size:10.6px;color:#fff;white-space:nowrap;text-align:left;">NUM</div>
<div style="position:absolute;left:1826px;top:924.0px;line-height:14px;font-size:10.6px;color:#7890a8;white-space:nowrap;text-align:left;">SCRL</div>
<div style="position:absolute;left:1871px;top:924.0px;line-height:14px;font-size:10.6px;color:#7890a8;white-space:nowrap;text-align:left;">CLOUD</div>
</body></html>
